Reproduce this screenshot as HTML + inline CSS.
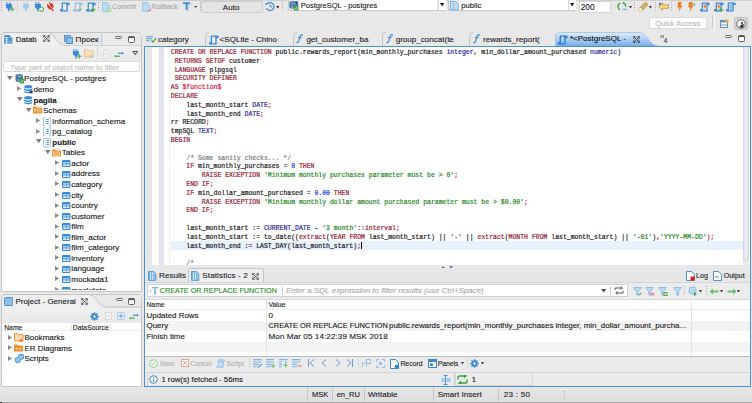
<!DOCTYPE html><html><head><meta charset="utf-8"><style>html,body{margin:0;padding:0;}body{width:752px;height:403px;overflow:hidden;position:relative;background:#e8e8e8;font-family:"Liberation Sans",sans-serif;}</style></head><body>
<svg style="position:absolute;left:1px;top:2px" width="1" height="10" viewBox="0 0 1 10"><rect x="0" y="0.0" width="1" height="1" fill="#a8a8a8"/><rect x="0" y="2.5" width="1" height="1" fill="#a8a8a8"/><rect x="0" y="5.0" width="1" height="1" fill="#a8a8a8"/><rect x="0" y="7.5" width="1" height="1" fill="#a8a8a8"/></svg>
<div style="position:absolute;left:0px;top:0px;width:752px;height:0.8px;background:#cfcfcf"></div>
<svg style="position:absolute;left:5px;top:1.8px" width="10" height="10" viewBox="0 0 10 10"><rect x="1.5" y="0" width="1" height="2.4" fill="#3a8ad6"/><rect x="4.3" y="0" width="1" height="2.4" fill="#3a8ad6"/><path d="M0.9 2.1 H6.9 V4.4 Q6.9 6.6 4.6 7.1 V9.6 H3.2 V7.1 Q0.9 6.6 0.9 4.4 Z" fill="#3a8ad6"/><path d="M7.2 5 V9.6 M4.9 7.3 H9.5" stroke="#4aa84a" stroke-width="1.05"/></svg>
<div style="position:absolute;left:17.3px;top:0px;width:1px;height:12.5px;background:#d6d6d6"></div>
<svg style="position:absolute;left:22.4px;top:1.8px" width="10" height="10" viewBox="0 0 10 10"><rect x="1.5" y="0" width="1" height="2.4" fill="#9ccbee"/><rect x="4.3" y="0" width="1" height="2.4" fill="#9ccbee"/><path d="M0.9 2.1 H6.9 V4.4 Q6.9 6.6 4.6 7.1 V9.6 H3.2 V7.1 Q0.9 6.6 0.9 4.4 Z" fill="#9ccbee"/></svg>
<svg style="position:absolute;left:34.4px;top:1.8px" width="10" height="10" viewBox="0 0 10 10"><rect x="1.5" y="0" width="1" height="2.4" fill="#3a8ad6"/><rect x="4.3" y="0" width="1" height="2.4" fill="#3a8ad6"/><path d="M0.9 2.1 H6.9 V4.4 Q6.9 6.6 4.6 7.1 V9.6 H3.2 V7.1 Q0.9 6.6 0.9 4.4 Z" fill="#3a8ad6"/><path d="M5.6 6.2 A2.1 2.1 0 1 1 6 8.6" stroke="#4aa84a" stroke-width="1.1" fill="#fff"/><path d="M5 8.8 L6.6 9.6 L6.4 7.8 Z" fill="#4aa84a"/></svg>
<svg style="position:absolute;left:47.2px;top:1.6px" width="10" height="10" viewBox="0 0 10 10"><g transform="rotate(-30 4 5)"><rect x="1.5" y="0" width="1" height="2.4" fill="#e0342a"/><rect x="4.3" y="0" width="1" height="2.4" fill="#e0342a"/><path d="M0.9 2.1 H6.9 V4.4 Q6.9 6.6 4.6 7.1 V9.6 H3.2 V7.1 Q0.9 6.6 0.9 4.4 Z" fill="#e0342a"/></g><path d="M0.8 1.8 L8 9" stroke="#ececec" stroke-width="0.8"/></svg>
<svg style="position:absolute;left:59.8px;top:1.8px" width="10" height="10" viewBox="0 0 10 10"><g opacity="1" fill="none" stroke="#3a8ad6" stroke-width="1.25" stroke-linecap="round"><path d="M2.3 8.6 V1.2 H8.2 Q9.2 1.2 9.2 2.1 Q9.2 2.7 8.4 2.7 H7"/><path d="M7 1.4 V8.6"/><path d="M7 8.9 H1.4 Q0.5 8.9 0.5 8.1 Q0.5 7.5 1.2 7.5 H2.3"/></g></svg>
<svg style="position:absolute;left:72.8px;top:1.8px" width="10" height="10" viewBox="0 0 10 10"><g opacity="0.45" fill="none" stroke="#3a8ad6" stroke-width="1.25" stroke-linecap="round"><path d="M2.3 8.6 V1.2 H8.2 Q9.2 1.2 9.2 2.1 Q9.2 2.7 8.4 2.7 H7"/><path d="M7 1.4 V8.6"/><path d="M7 8.9 H1.4 Q0.5 8.9 0.5 8.1 Q0.5 7.5 1.2 7.5 H2.3"/></g><path d="M4 7.6 H8 M6.6 6.2 L8.2 7.6 L6.6 9" stroke="#80c880" stroke-width="1.1" fill="none"/></svg>
<svg style="position:absolute;left:86.1px;top:1.8px" width="10" height="10" viewBox="0 0 10 10"><g opacity="1" fill="none" stroke="#3a8ad6" stroke-width="1.25" stroke-linecap="round"><path d="M2.3 8.6 V1.2 H8.2 Q9.2 1.2 9.2 2.1 Q9.2 2.7 8.4 2.7 H7"/><path d="M7 1.4 V8.6"/><path d="M7 8.9 H1.4 Q0.5 8.9 0.5 8.1 Q0.5 7.5 1.2 7.5 H2.3"/></g><path d="M7 5.2 V10 M4.6 7.6 H9.4" stroke="#4aa84a" stroke-width="1.2"/></svg>
<svg style="position:absolute;left:98px;top:2px" width="1" height="10" viewBox="0 0 1 10"><rect x="0" y="0.0" width="1" height="1" fill="#a8a8a8"/><rect x="0" y="2.5" width="1" height="1" fill="#a8a8a8"/><rect x="0" y="5.0" width="1" height="1" fill="#a8a8a8"/><rect x="0" y="7.5" width="1" height="1" fill="#a8a8a8"/></svg>
<svg style="position:absolute;left:101.5px;top:1.8px" width="10" height="10" viewBox="0 0 10 10"><path d="M0.5 0.5 H5.2 L7.8 3.1 V9.5 H0.5 Z" fill="#bcdcf2" stroke="#94c6ea" stroke-width="0.9"/><path d="M5.2 0.5 V3.1 H7.8" fill="#e4f1fa" stroke="#94c6ea" stroke-width="0.7"/><rect x="5" y="5.8" width="4.3" height="4" rx="1" fill="#a8dba2"/><path d="M6.2 7.9 l0.8 0.6 l1.2 -1.3" stroke="#fff" stroke-width="0.6" fill="none"/></svg>
<div style="position:absolute;left:112.3px;top:4.00px;font-family:'Liberation Sans', sans-serif;font-size:6.85px;line-height:6.85px;color:#a9a9a9;font-weight:400;white-space:pre;-webkit-text-stroke:0.12px #a9a9a9;">Commit</div>
<svg style="position:absolute;left:141.6px;top:1.8px" width="10" height="10" viewBox="0 0 10 10"><path d="M0.5 0.5 H5.2 L7.8 3.1 V9.5 H0.5 Z" fill="#bcdcf2" stroke="#94c6ea" stroke-width="0.9"/><path d="M5.2 0.5 V3.1 H7.8" fill="#e4f1fa" stroke="#94c6ea" stroke-width="0.7"/><path d="M5.6 8.4 h3 M8.6 8.4 v-1.6" stroke="#ef8a7a" stroke-width="1.1" fill="none"/></svg>
<div style="position:absolute;left:151.5px;top:4.00px;font-family:'Liberation Sans', sans-serif;font-size:6.85px;line-height:6.85px;color:#a9a9a9;font-weight:400;white-space:pre;-webkit-text-stroke:0.12px #a9a9a9;">Rollback</div>
<svg style="position:absolute;left:183px;top:1.8px" width="10" height="10" viewBox="0 0 10 10"><path d="M0 1.2 H7" stroke="#3a8ad6" stroke-width="1.7"/><path d="M3.6 0.4 V8" stroke="#3a8ad6" stroke-width="1.9"/><path d="M5 2 V9" stroke="#8cc0ea" stroke-width="1.1"/><path d="M7 2.6 H8.8" stroke="#8cc0ea" stroke-width="0.8"/></svg>
<svg style="position:absolute;left:193.8px;top:6.1px" width="3.2" height="2" viewBox="0 0 3.2 2"><path d="M0 0 L3.2 0 L1.6 2 Z" fill="#555"/></svg>
<svg style="position:absolute;left:199.5px;top:2px" width="1" height="10" viewBox="0 0 1 10"><rect x="0" y="0.0" width="1" height="1" fill="#a8a8a8"/><rect x="0" y="2.5" width="1" height="1" fill="#a8a8a8"/><rect x="0" y="5.0" width="1" height="1" fill="#a8a8a8"/><rect x="0" y="7.5" width="1" height="1" fill="#a8a8a8"/></svg>
<div style="position:absolute;left:201px;top:0.5px;width:61.5px;height:12.5px;background:#e4e4e4;border:1px solid #cdcdcd;box-sizing:border-box;border-radius:2px"></div>
<div style="position:absolute;left:222.8px;top:4.00px;font-family:'Liberation Sans', sans-serif;font-size:8.05px;line-height:8.05px;color:#222;font-weight:400;white-space:pre;-webkit-text-stroke:0.12px #222;">Auto</div>
<svg style="position:absolute;left:264.6px;top:2.2px" width="10" height="9" viewBox="0 0 10 9"><path d="M1.3 6.2 A4 4 0 1 0 1.4 2.6" stroke="#3a8ad6" stroke-width="1.15" fill="none"/><path d="M0 1.2 L2.6 1.6 L1 3.6 Z" fill="#3a8ad6"/><path d="M5.2 2.2 V4.8 H7" stroke="#3a8ad6" stroke-width="1" fill="none"/></svg>
<svg style="position:absolute;left:275.5px;top:6px" width="3.5" height="2.5" viewBox="0 0 3.5 2.5"><path d="M0 0 L3.5 0 L1.75 2.5 Z" fill="#333"/></svg>
<svg style="position:absolute;left:281.5px;top:2px" width="1" height="10" viewBox="0 0 1 10"><rect x="0" y="0.0" width="1" height="1" fill="#a8a8a8"/><rect x="0" y="2.5" width="1" height="1" fill="#a8a8a8"/><rect x="0" y="5.0" width="1" height="1" fill="#a8a8a8"/><rect x="0" y="7.5" width="1" height="1" fill="#a8a8a8"/></svg>
<div style="position:absolute;left:288px;top:-1px;width:158px;height:11.8px;background:#e6e6e6;border:1px solid #cacaca;box-sizing:border-box"></div>
<div style="position:absolute;left:299.2px;top:0px;width:138.3px;height:9.8px;background:#fff"></div>
<svg style="position:absolute;left:288.5px;top:0.6px" width="10" height="10" viewBox="0 0 10 10"><path d="M0.4 1.8 Q0.4 0.3 2 0.3 H7.6 Q9.2 0.3 9.2 1.8 V4.6 Q9.2 6.2 7.8 6.6 L7.2 7.6 H2.4 Q0.4 7.6 0.4 5.6 Z" fill="#4b77a6"/><path d="M2.2 2 Q4.2 3.6 7.2 2.2 M3 4.4 L3.4 7" stroke="#c8dcf0" stroke-width="0.7" fill="none"/><circle cx="7.4" cy="1.8" r="1.1" fill="#2a3f8a"/><rect x="4.8" y="4.6" width="4.6" height="4.8" rx="0.8" fill="#3da34a"/><path d="M5.9 7.1 l1 0.9 l1.4 -1.9" stroke="#fff" stroke-width="0.7" fill="none"/></svg>
<div style="position:absolute;left:300.7px;top:2.00px;font-family:'Liberation Sans', sans-serif;font-size:7.55px;line-height:7.55px;color:#1a1a1a;font-weight:400;white-space:pre;-webkit-text-stroke:0.12px #1a1a1a;">PostgreSQL - postgres</div>
<div style="position:absolute;left:437.6px;top:0px;width:8px;height:9.8px;background:#fff;border-left:1px solid #d8d8d8;box-sizing:border-box"></div>
<svg style="position:absolute;left:439.6px;top:3.4px" width="4.2" height="3.6" viewBox="0 0 4.2 3.6"><path d="M0 0 L4.2 0 L2.1 3.6 Z" fill="#1a1a1a"/></svg>
<div style="position:absolute;left:448px;top:-1px;width:127.8px;height:11.8px;background:#e6e6e6;border:1px solid #cacaca;box-sizing:border-box"></div>
<div style="position:absolute;left:459.4px;top:0px;width:109px;height:9.8px;background:#fff"></div>
<svg style="position:absolute;left:449.8px;top:0.8px" width="9" height="10" viewBox="0 0 9 10"><path d="M0.5 0.5 H5.6 L8.2 3.1 V9 H0.5 Z" fill="#cfe4f6" stroke="#6aaae6" stroke-width="0.9"/><path d="M3.2 2.6 H4.6 M3.2 4.4 H4.6 M3.2 6.2 H4.6 M3.2 7.8 H4.6" stroke="#5a9ad8" stroke-width="0.8"/><path d="M2.6 1.8 V8.4 M5.2 2 V8.4" stroke="#a8cff0" stroke-width="0.5"/></svg>
<div style="position:absolute;left:461.2px;top:2.00px;font-family:'Liberation Sans', sans-serif;font-size:7.7px;line-height:7.7px;color:#1a1a1a;font-weight:400;white-space:pre;-webkit-text-stroke:0.12px #1a1a1a;">public</div>
<div style="position:absolute;left:568.4px;top:0px;width:7.4px;height:9.8px;background:#fff;border-left:1px solid #d8d8d8;box-sizing:border-box"></div>
<svg style="position:absolute;left:570.2px;top:3.4px" width="4.2" height="3.6" viewBox="0 0 4.2 3.6"><path d="M0 0 L4.2 0 L2.1 3.6 Z" fill="#1a1a1a"/></svg>
<div style="position:absolute;left:578.5px;top:0.5px;width:32px;height:12px;background:#fff;border:1px solid #d6d6d6;box-sizing:border-box"></div>
<div style="position:absolute;left:580.7px;top:3.00px;font-family:'Liberation Sans', sans-serif;font-size:8.4px;line-height:8.4px;color:#1a1a1a;font-weight:400;white-space:pre;-webkit-text-stroke:0.12px #1a1a1a;">200</div>
<svg style="position:absolute;left:616.5px;top:2px" width="11" height="9" viewBox="0 0 11 9"><path d="M3.2 0.9 Q0.6 2.6 0.9 5 Q1.2 7 2.8 7.9" stroke="#45a845" stroke-width="1.5" fill="none"/><path d="M6.3 0.9 Q8.4 1.4 8.9 4.6" stroke="#45a845" stroke-width="1.4" fill="none"/><path d="M5.2 0 L7.4 0.2 L6.4 2.4 Z" fill="#45a845"/><path d="M5.2 5.8 L7.7 7.3 L5.2 8.9 Z M10.2 5.8 L7.7 7.3 L10.2 8.9 Z" fill="#9ccaee"/><circle cx="7.7" cy="7.4" r="0.6" fill="#3a8ad6"/></svg>
<svg style="position:absolute;left:629px;top:6px" width="3" height="2.5" viewBox="0 0 3 2.5"><path d="M0 0 L3 0 L1.5 2.5 Z" fill="#333"/></svg>
<svg style="position:absolute;left:634px;top:2px" width="1" height="10" viewBox="0 0 1 10"><rect x="0" y="0.0" width="1" height="1" fill="#a8a8a8"/><rect x="0" y="2.5" width="1" height="1" fill="#a8a8a8"/><rect x="0" y="5.0" width="1" height="1" fill="#a8a8a8"/><rect x="0" y="7.5" width="1" height="1" fill="#a8a8a8"/></svg>
<svg style="position:absolute;left:637.8px;top:2px" width="10" height="10" viewBox="0 0 10 10"><g transform="rotate(45 5 5)"><rect x="3" y="-0.6" width="4" height="11.2" rx="1.6" fill="#e6b24a" stroke="#c89236" stroke-width="0.5"/><rect x="3" y="5.2" width="4" height="2.2" fill="#a9a9b4"/><rect x="3.2" y="7.4" width="3.6" height="3" rx="1.2" fill="#fbf0c0"/><circle cx="5" cy="1.6" r="0.9" fill="#5a9ad8"/></g></svg>
<svg style="position:absolute;left:649px;top:6px" width="3" height="2.5" viewBox="0 0 3 2.5"><path d="M0 0 L3 0 L1.5 2.5 Z" fill="#333"/></svg>
<svg style="position:absolute;left:655px;top:2px" width="1" height="10" viewBox="0 0 1 10"><rect x="0" y="0.0" width="1" height="1" fill="#a8a8a8"/><rect x="0" y="2.5" width="1" height="1" fill="#a8a8a8"/><rect x="0" y="5.0" width="1" height="1" fill="#a8a8a8"/><rect x="0" y="7.5" width="1" height="1" fill="#a8a8a8"/></svg>
<svg style="position:absolute;left:658px;top:2px" width="11" height="9" viewBox="0 0 11 9"><path d="M0.5 4.5 L4.5 0.8 v2 h6 v3.5 h-6 v2 z" fill="#f7d68a" stroke="#c89a3a" stroke-width="0.9"/><circle cx="2" cy="2" r="1.3" fill="#3d86d0"/></svg>
<svg style="position:absolute;left:671px;top:2px" width="1" height="10" viewBox="0 0 1 10"><rect x="0" y="0.0" width="1" height="1" fill="#a8a8a8"/><rect x="0" y="2.5" width="1" height="1" fill="#a8a8a8"/><rect x="0" y="5.0" width="1" height="1" fill="#a8a8a8"/><rect x="0" y="7.5" width="1" height="1" fill="#a8a8a8"/></svg>
<svg style="position:absolute;left:677px;top:1.5px" width="6" height="10" viewBox="0 0 6 10"><path d="M1 0 h4 l-1.5 3.5 h2 l-4 6.5 l1 -4.5 h-2 z" fill="#f07c1e"/></svg>
<svg style="position:absolute;left:688px;top:1.5px" width="8" height="10" viewBox="0 0 8 10"><path d="M1 0 h4 l-1.5 3.5 h2 l-4 6.5 l1 -4.5 h-2 z" fill="#f07c1e"/><path d="M6 1 v3 M4.5 2.5 h3" stroke="#6cc06c" stroke-width="0.9"/></svg>
<svg style="position:absolute;left:700px;top:1.8px" width="10" height="10" viewBox="0 0 10 10"><g opacity="1" fill="none" stroke="#3a8ad6" stroke-width="1.25" stroke-linecap="round"><path d="M2.3 8.6 V1.2 H8.2 Q9.2 1.2 9.2 2.1 Q9.2 2.7 8.4 2.7 H7"/><path d="M7 1.4 V8.6"/><path d="M7 8.9 H1.4 Q0.5 8.9 0.5 8.1 Q0.5 7.5 1.2 7.5 H2.3"/></g><path d="M3.6 2.8 h2.4 l-0.6 1.6 h0.9 l-2 3 l0.4 -2 h-0.9 z" fill="#f07c1e"/></svg>
<svg style="position:absolute;left:713.5px;top:1.8px" width="10" height="10" viewBox="0 0 10 10"><g opacity="1" fill="none" stroke="#3a8ad6" stroke-width="1.25" stroke-linecap="round"><path d="M2.3 8.6 V1.2 H8.2 Q9.2 1.2 9.2 2.1 Q9.2 2.7 8.4 2.7 H7"/><path d="M7 1.4 V8.6"/><path d="M7 8.9 H1.4 Q0.5 8.9 0.5 8.1 Q0.5 7.5 1.2 7.5 H2.3"/></g><path d="M3.6 2.8 h2.4 l-0.6 1.6 h0.9 l-2 3 l0.4 -2 h-0.9 z" fill="#f07c1e"/><path d="M7.2 5.6 V10 M5 7.8 H9.4" stroke="#4aa84a" stroke-width="1.2"/></svg>
<svg style="position:absolute;left:726.2px;top:1.8px" width="10" height="10" viewBox="0 0 10 10"><g opacity="1" fill="none" stroke="#3a8ad6" stroke-width="1.25" stroke-linecap="round"><path d="M2.3 8.6 V1.2 H8.2 Q9.2 1.2 9.2 2.1 Q9.2 2.7 8.4 2.7 H7"/><path d="M7 1.4 V8.6"/><path d="M7 8.9 H1.4 Q0.5 8.9 0.5 8.1 Q0.5 7.5 1.2 7.5 H2.3"/></g><path d="M3.6 3.6 h2.2 M3.6 5.3 h2.2 M3.6 7 h2.2" stroke="#3a8ad6" stroke-width="0.9"/></svg>
<div style="position:absolute;left:648.5px;top:16.5px;width:58px;height:12px;background:#fff;border:1px solid #dadada;box-sizing:border-box"></div>
<div style="position:absolute;left:655.2px;top:20.00px;font-family:'Liberation Sans', sans-serif;font-size:7.5px;line-height:7.5px;color:#b9b9b9;font-weight:400;white-space:pre;-webkit-text-stroke:0.12px #b9b9b9;">Quick Access</div>
<svg style="position:absolute;left:711.5px;top:16px" width="1" height="13" viewBox="0 0 1 13"><rect x="0" y="0.0" width="1" height="1" fill="#a8a8a8"/><rect x="0" y="2.5" width="1" height="1" fill="#a8a8a8"/><rect x="0" y="5.0" width="1" height="1" fill="#a8a8a8"/><rect x="0" y="7.5" width="1" height="1" fill="#a8a8a8"/><rect x="0" y="10.0" width="1" height="1" fill="#a8a8a8"/></svg>
<div style="position:absolute;left:714px;top:14px;width:1px;height:18px;background:#f6f6f6"></div>
<svg style="position:absolute;left:720px;top:18.5px" width="9" height="9" viewBox="0 0 9 9"><rect x="0.5" y="1.5" width="7" height="7" fill="#fff" stroke="#6a8fb8" stroke-width="1"/><rect x="0.5" y="1.5" width="7" height="2" fill="#6a8fb8"/><path d="M0.5 6 h7" stroke="#6a8fb8" stroke-width="1"/><circle cx="7" cy="2" r="1.8" fill="#f3b13a"/></svg>
<div style="position:absolute;left:734px;top:17px;width:13.5px;height:12.5px;background:#d2d2d2;border:1px solid #c2c2c2;box-sizing:border-box;border-radius:2px"></div>
<svg style="position:absolute;left:736px;top:18.5px" width="10" height="10" viewBox="0 0 10 10"><circle cx="5" cy="5" r="4.3" fill="#f4f4f4" stroke="#555" stroke-width="0.8"/><path d="M3 8 q2 -3 5 -3 l-1 4 z" fill="#333"/><circle cx="6" cy="4" r="1" fill="#333"/></svg>
<div style="position:absolute;left:1px;top:32px;width:141px;height:259.5px;box-sizing:border-box;border:1px solid #c6c6c6;border-radius:5px 5px 0 0;background:#fff;overflow:hidden">
<div style="position:absolute;left:0;top:0;width:141px;height:13px;background:#e9e9e9"></div>
</div>
<div style="position:absolute;left:2px;top:45px;width:139px;height:16.5px;background:linear-gradient(#efefef,#e9e9e9)"></div>
<svg style="position:absolute;left:1px;top:32px" width="142" height="14" viewBox="0 0 142 14"><path d="M0.5 14 V5 Q0.5 0.5 5 0.5 H46.5 C53 0.5 56 13 64 13.5 H140.5" fill="#efefef" stroke="#c2c2c2" stroke-width="1"/><path d="M64 13.5 H140.5" stroke="#d0d0d0" stroke-width="1"/><path d="M100.5 0.5 V13.5" stroke="#c8c8c8" stroke-width="1"/></svg>
<svg style="position:absolute;left:3.8px;top:34.8px" width="9" height="9" viewBox="0 0 9 9"><rect x="0" y="0.3" width="6.5" height="1.8" rx="0.9" fill="#2f80d0"/><rect x="0" y="3" width="2.2" height="1.5" fill="#2f80d0"/><rect x="3.2" y="2.5" width="5.3" height="2.2" rx="1" fill="#2f80d0"/><rect x="0" y="5.2" width="2.2" height="1.3" fill="#2f80d0"/><rect x="3.2" y="5.2" width="5.3" height="1.3" fill="#2f80d0"/><rect x="0" y="7.2" width="2.2" height="1.3" fill="#2f80d0"/><rect x="3.2" y="7.2" width="5.3" height="1.3" rx="0.6" fill="#2f80d0"/></svg>
<div style="position:absolute;left:15.85px;top:36.00px;font-family:'Liberation Sans', sans-serif;font-size:7.8px;line-height:7.8px;color:#151515;font-weight:400;white-space:pre;-webkit-text-stroke:0.12px #151515;">Datab</div>
<svg style="position:absolute;left:43px;top:35.4px" width="7" height="7" viewBox="0 0 7 7"><path d="M1.6 1.6 L5.4 5.4 M5.4 1.6 L1.6 5.4" stroke="#3c3c3c" stroke-width="0.75"/><path d="M0.8 2.2 V0.8 H2.2 M4.8 0.8 H6.2 V2.2 M6.2 4.8 V6.2 H4.8 M2.2 6.2 H0.8 V4.8" stroke="#3c3c3c" stroke-width="1.05" fill="none"/><path d="M2.1 0.9 Q3.5 1.6 4.9 0.9 M2.1 6.1 Q3.5 5.4 4.9 6.1 M0.9 2.1 Q1.6 3.5 0.9 4.9 M6.1 2.1 Q5.4 3.5 6.1 4.9" stroke="#3c3c3c" stroke-width="0.5" fill="none" opacity="0.75"/></svg>
<svg style="position:absolute;left:64px;top:35px" width="9" height="9" viewBox="0 0 9 9"><rect x="0.5" y="0.5" width="6" height="6" fill="#8cc0ea" stroke="#3d86d0" stroke-width="0.8"/><rect x="2.5" y="2.5" width="6" height="6" fill="#8cc0ea" stroke="#3d86d0" stroke-width="0.8"/></svg>
<div style="position:absolute;left:75.6px;top:36.00px;font-family:'Liberation Sans', sans-serif;font-size:8.1px;line-height:8.1px;color:#151515;font-weight:400;white-space:pre;-webkit-text-stroke:0.12px #151515;letter-spacing:0.05px">Проек</div>
<svg style="position:absolute;left:115px;top:35.5px" width="7" height="3" viewBox="0 0 7 3"><rect x="0.5" y="0.5" width="6" height="2" rx="1" fill="#fff" stroke="#555" stroke-width="0.9"/></svg>
<svg style="position:absolute;left:128.3px;top:35.5px" width="7" height="7" viewBox="0 0 7 7"><rect x="0.5" y="0.5" width="6" height="6" rx="1.2" fill="#fff" stroke="#555" stroke-width="0.9"/><rect x="0.5" y="0.5" width="6" height="1.6" fill="#555"/></svg>
<svg style="position:absolute;left:72.4px;top:49.2px" width="10" height="10" viewBox="0 0 10 10"><rect x="1.5" y="0" width="1" height="2.4" fill="#3a8ad6"/><rect x="4.3" y="0" width="1" height="2.4" fill="#3a8ad6"/><path d="M0.9 2.1 H6.9 V4.4 Q6.9 6.6 4.6 7.1 V9.6 H3.2 V7.1 Q0.9 6.6 0.9 4.4 Z" fill="#3a8ad6"/><path d="M7.2 5 V9.6 M4.9 7.3 H9.5" stroke="#4aa84a" stroke-width="1.05"/></svg>
<svg style="position:absolute;left:84.2px;top:49.2px" width="10" height="10" viewBox="0 0 10 10"><path d="M0.5 1 H3.4 L4.3 2 H9 V8 H0.5 Z" fill="#fbe0c4" stroke="#f5b77a" stroke-width="0.9"/><path d="M6.8 5.4 V9.4 M4.8 7.4 H8.8" stroke="#a8d8a0" stroke-width="1.1"/></svg>
<div style="position:absolute;left:97.3px;top:47px;width:1px;height:13px;background:#dadada"></div>
<svg style="position:absolute;left:102.8px;top:49.8px" width="8" height="9" viewBox="0 0 8 9"><rect x="0.5" y="0.5" width="6.5" height="7.5" rx="0.8" fill="#f2f2f2" stroke="#dcdcdc" stroke-width="0.9"/><path d="M2 4.25 h3.5" stroke="#d4d4d4" stroke-width="1"/></svg>
<svg style="position:absolute;left:114px;top:50.5px" width="10" height="7" viewBox="0 0 10 7"><path d="M1.5 5.2 H6" stroke="#45a845" stroke-width="1.1"/><path d="M0 5.2 L2.2 3.8 V6.6 Z" fill="#45a845"/><path d="M4 2.2 H8.5" stroke="#3a8ad6" stroke-width="1.1"/><path d="M10 2.2 L7.8 0.8 V3.6 Z" fill="#3a8ad6"/></svg>
<svg style="position:absolute;left:131.8px;top:51.4px" width="6.5" height="4.5" viewBox="0 0 6.5 4.5"><path d="M0 0 H6.5 L3.25 4.2 Z" fill="#4a4a4a"/><path d="M1.4 0.9 H5.1 L3.25 2.4 Z" fill="#f4f4f4"/></svg>
<div style="position:absolute;left:3px;top:61.2px;width:136.5px;height:11.2px;background:#fff;border:1px solid #dcdcdc;box-sizing:border-box;border-radius:2px"></div>
<div style="position:absolute;left:10.0px;top:64.00px;font-family:'Liberation Sans', sans-serif;font-size:7.65px;line-height:7.65px;color:#bdbdbd;font-weight:400;white-space:pre;-webkit-text-stroke:0.12px #bdbdbd;">Type part of object name to filter</div>
<svg style="position:absolute;left:7.3px;top:75.9px" width="6" height="4.5" viewBox="0 0 6 4.5"><path d="M0 0 H5.5 L2.75 4.2 Z" fill="#7c7c7c"/></svg>
<svg style="position:absolute;left:14.7px;top:73.9px" width="10" height="10" viewBox="0 0 10 10"><path d="M0.5 1.5 Q0.5 0.3 2 0.3 H6.5 Q8 0.3 8 1.8 V6 Q8 8 6 8 H2.5 Q0.5 8 0.5 6 Z" fill="#4b77a6"/><path d="M2.5 2 Q4 3.5 6.5 2.2 M3 5 L3.4 7.5" stroke="#c8dcf0" stroke-width="0.7" fill="none"/><rect x="4.6" y="4.8" width="4.6" height="4.6" rx="0.6" fill="#3da34a"/><path d="M5.7 7.2 l1 0.9 l1.4 -1.8" stroke="#fff" stroke-width="0.7" fill="none"/></svg>
<div style="position:absolute;left:24.1px;top:75.00px;font-family:'Liberation Sans', sans-serif;font-size:8.1px;line-height:8.1px;color:#151515;font-weight:400;white-space:pre;-webkit-text-stroke:0.12px #151515;">PostgreSQL - postgres</div>
<svg style="position:absolute;left:17.4px;top:86.36000000000001px" width="4.5" height="5.5" viewBox="0 0 4.5 5.5"><path d="M0 0 L4.2 2.5 L0 5 Z" fill="#8c8c8c"/></svg>
<svg style="position:absolute;left:23.8px;top:85.16000000000001px" width="9" height="9" viewBox="0 0 9 9"><ellipse cx="4.2" cy="1.8" rx="4" ry="1.7" fill="#3a8ad6"/><path d="M0.2 2.6 Q0.2 4.4 4.2 4.4 Q8.2 4.4 8.2 2.6 V4.2 Q8.2 5.9 4.2 5.9 Q0.2 5.9 0.2 4.2 Z" fill="#3a8ad6"/><path d="M0.2 5 Q0.2 6.8 4.2 6.8 Q8.2 6.8 8.2 5 V6.6 Q8.2 8.3 4.2 8.3 Q0.2 8.3 0.2 6.6 Z" fill="#3a8ad6"/><rect x="5.6" y="5.6" width="3" height="2.8" fill="#2a3f8a"/></svg>
<div style="position:absolute;left:33.52px;top:86.00px;font-family:'Liberation Sans', sans-serif;font-size:8.1px;line-height:8.1px;color:#151515;font-weight:400;white-space:pre;-webkit-text-stroke:0.12px #151515;">demo</div>
<svg style="position:absolute;left:16.7px;top:97.02000000000001px" width="6" height="4.5" viewBox="0 0 6 4.5"><path d="M0 0 H5.5 L2.75 4.2 Z" fill="#7c7c7c"/></svg>
<svg style="position:absolute;left:23.8px;top:95.72000000000001px" width="9" height="9" viewBox="0 0 9 9"><ellipse cx="4.2" cy="1.8" rx="4" ry="1.7" fill="#3a8ad6"/><path d="M0.2 2.6 Q0.2 4.4 4.2 4.4 Q8.2 4.4 8.2 2.6 V4.2 Q8.2 5.9 4.2 5.9 Q0.2 5.9 0.2 4.2 Z" fill="#3a8ad6"/><path d="M0.2 5 Q0.2 6.8 4.2 6.8 Q8.2 6.8 8.2 5 V6.6 Q8.2 8.3 4.2 8.3 Q0.2 8.3 0.2 6.6 Z" fill="#3a8ad6"/></svg>
<div style="position:absolute;left:33.52px;top:97.00px;font-family:'Liberation Sans', sans-serif;font-size:8.0px;line-height:8.0px;color:#151515;font-weight:700;white-space:pre;-webkit-text-stroke:0.1px #151515">pagila</div>
<svg style="position:absolute;left:26.1px;top:107.58000000000001px" width="6" height="4.5" viewBox="0 0 6 4.5"><path d="M0 0 H5.5 L2.75 4.2 Z" fill="#7c7c7c"/></svg>
<svg style="position:absolute;left:33.2px;top:106.38000000000001px" width="9" height="8" viewBox="0 0 9 8"><path d="M0 0.6 H3.2 L4 1.4 H9 V7.5 H0 Z" fill="#f0902a"/><path d="M2 3.4 V6.2 M4.5 3.4 V6.2 M7 3.4 V6.2" stroke="#fde3c6" stroke-width="0.9"/><path d="M1.4 3.2 H7.6" stroke="#fde3c6" stroke-width="0.6"/></svg>
<div style="position:absolute;left:42.94px;top:107.00px;font-family:'Liberation Sans', sans-serif;font-size:8.1px;line-height:8.1px;color:#151515;font-weight:400;white-space:pre;-webkit-text-stroke:0.12px #151515;">Schemas</div>
<svg style="position:absolute;left:36.2px;top:118.04000000000002px" width="4.5" height="5.5" viewBox="0 0 4.5 5.5"><path d="M0 0 L4.2 2.5 L0 5 Z" fill="#8c8c8c"/></svg>
<svg style="position:absolute;left:42.7px;top:116.74000000000001px" width="8.5" height="9.5" viewBox="0 0 8.5 9.5"><path d="M2 0.5 H0.5 V8.5 H2 M6.2 0.5 H7.7 V8.5 H6.2" stroke="#8ec2ec" stroke-width="0.9" fill="none"/><path d="M2.2 2.5 h0.8 M2.2 4.5 h0.8 M2.2 6.5 h0.8" stroke="#8cc4ee" stroke-width="0.8"/><path d="M3.6 2.5 h2 M3.6 4.5 h2 M3.6 6.5 h2" stroke="#2f7fd0" stroke-width="1"/></svg>
<div style="position:absolute;left:52.36px;top:118.00px;font-family:'Liberation Sans', sans-serif;font-size:8.1px;line-height:8.1px;color:#151515;font-weight:400;white-space:pre;-webkit-text-stroke:0.12px #151515;">information_schema</div>
<svg style="position:absolute;left:36.2px;top:128.60000000000002px" width="4.5" height="5.5" viewBox="0 0 4.5 5.5"><path d="M0 0 L4.2 2.5 L0 5 Z" fill="#8c8c8c"/></svg>
<svg style="position:absolute;left:42.7px;top:127.30000000000001px" width="8.5" height="9.5" viewBox="0 0 8.5 9.5"><path d="M2 0.5 H0.5 V8.5 H2 M6.2 0.5 H7.7 V8.5 H6.2" stroke="#8ec2ec" stroke-width="0.9" fill="none"/><path d="M2.2 2.5 h0.8 M2.2 4.5 h0.8 M2.2 6.5 h0.8" stroke="#8cc4ee" stroke-width="0.8"/><path d="M3.6 2.5 h2 M3.6 4.5 h2 M3.6 6.5 h2" stroke="#2f7fd0" stroke-width="1"/></svg>
<div style="position:absolute;left:52.36px;top:128.00px;font-family:'Liberation Sans', sans-serif;font-size:8.1px;line-height:8.1px;color:#151515;font-weight:400;white-space:pre;-webkit-text-stroke:0.12px #151515;">pg_catalog</div>
<svg style="position:absolute;left:35.5px;top:139.26px" width="6" height="4.5" viewBox="0 0 6 4.5"><path d="M0 0 H5.5 L2.75 4.2 Z" fill="#7c7c7c"/></svg>
<svg style="position:absolute;left:43.10000000000001px;top:137.56px" width="8" height="10" viewBox="0 0 8 10"><rect x="0.5" y="0.5" width="7" height="8.6" rx="1.6" fill="#fafcff" stroke="#8ec2ec" stroke-width="0.9"/><path d="M2 2.6 h0.9 M2 4.6 h0.9 M2 6.6 h0.9" stroke="#9cc8ee" stroke-width="0.8"/><path d="M3.8 2.6 h2 M3.8 4.6 h2 M3.8 6.6 h2" stroke="#2f7fd0" stroke-width="1"/></svg>
<div style="position:absolute;left:52.36px;top:139.00px;font-family:'Liberation Sans', sans-serif;font-size:8.0px;line-height:8.0px;color:#151515;font-weight:700;white-space:pre;-webkit-text-stroke:0.1px #151515">public</div>
<svg style="position:absolute;left:44.9px;top:149.82px" width="6" height="4.5" viewBox="0 0 6 4.5"><path d="M0 0 H5.5 L2.75 4.2 Z" fill="#7c7c7c"/></svg>
<svg style="position:absolute;left:52.0px;top:148.62px" width="9" height="8" viewBox="0 0 9 8"><path d="M0 0.6 H3.2 L4 1.4 H9 V7.5 H0 Z" fill="#f0902a"/><rect x="1.4" y="3" width="6.2" height="3.6" fill="none" stroke="#fde3c6" stroke-width="0.7"/><path d="M1.4 4.8 H7.6" stroke="#fde3c6" stroke-width="0.6"/></svg>
<div style="position:absolute;left:61.78px;top:149.00px;font-family:'Liberation Sans', sans-serif;font-size:8.1px;line-height:8.1px;color:#151515;font-weight:400;white-space:pre;-webkit-text-stroke:0.12px #151515;">Tables</div>
<svg style="position:absolute;left:55.0px;top:160.28px" width="4.5" height="5.5" viewBox="0 0 4.5 5.5"><path d="M0 0 L4.2 2.5 L0 5 Z" fill="#8c8c8c"/></svg>
<svg style="position:absolute;left:61.6px;top:159.98px" width="9" height="7" viewBox="0 0 9 7"><rect x="0" y="0" width="8.4" height="7" rx="1" fill="#3a8ad6"/><rect x="1.1" y="2" width="2.8" height="1.7" fill="#a6d0f2"/><rect x="4.5" y="2" width="2.8" height="1.7" fill="#a6d0f2"/><rect x="1.1" y="4.4" width="2.8" height="1.6" fill="#e8f3fc"/><rect x="4.5" y="4.4" width="2.8" height="1.6" fill="#e8f3fc"/></svg>
<div style="position:absolute;left:71.2px;top:160.00px;font-family:'Liberation Sans', sans-serif;font-size:8.1px;line-height:8.1px;color:#151515;font-weight:400;white-space:pre;-webkit-text-stroke:0.12px #151515;">actor</div>
<svg style="position:absolute;left:55.0px;top:170.84px" width="4.5" height="5.5" viewBox="0 0 4.5 5.5"><path d="M0 0 L4.2 2.5 L0 5 Z" fill="#8c8c8c"/></svg>
<svg style="position:absolute;left:61.6px;top:170.54px" width="9" height="7" viewBox="0 0 9 7"><rect x="0" y="0" width="8.4" height="7" rx="1" fill="#3a8ad6"/><rect x="1.1" y="2" width="2.8" height="1.7" fill="#a6d0f2"/><rect x="4.5" y="2" width="2.8" height="1.7" fill="#a6d0f2"/><rect x="1.1" y="4.4" width="2.8" height="1.6" fill="#e8f3fc"/><rect x="4.5" y="4.4" width="2.8" height="1.6" fill="#e8f3fc"/></svg>
<div style="position:absolute;left:71.2px;top:170.00px;font-family:'Liberation Sans', sans-serif;font-size:8.1px;line-height:8.1px;color:#151515;font-weight:400;white-space:pre;-webkit-text-stroke:0.12px #151515;">address</div>
<svg style="position:absolute;left:55.0px;top:181.4px" width="4.5" height="5.5" viewBox="0 0 4.5 5.5"><path d="M0 0 L4.2 2.5 L0 5 Z" fill="#8c8c8c"/></svg>
<svg style="position:absolute;left:61.6px;top:181.1px" width="9" height="7" viewBox="0 0 9 7"><rect x="0" y="0" width="8.4" height="7" rx="1" fill="#3a8ad6"/><rect x="1.1" y="2" width="2.8" height="1.7" fill="#a6d0f2"/><rect x="4.5" y="2" width="2.8" height="1.7" fill="#a6d0f2"/><rect x="1.1" y="4.4" width="2.8" height="1.6" fill="#e8f3fc"/><rect x="4.5" y="4.4" width="2.8" height="1.6" fill="#e8f3fc"/></svg>
<div style="position:absolute;left:71.2px;top:181.00px;font-family:'Liberation Sans', sans-serif;font-size:8.1px;line-height:8.1px;color:#151515;font-weight:400;white-space:pre;-webkit-text-stroke:0.12px #151515;">category</div>
<svg style="position:absolute;left:55.0px;top:191.96px" width="4.5" height="5.5" viewBox="0 0 4.5 5.5"><path d="M0 0 L4.2 2.5 L0 5 Z" fill="#8c8c8c"/></svg>
<svg style="position:absolute;left:61.6px;top:191.66px" width="9" height="7" viewBox="0 0 9 7"><rect x="0" y="0" width="8.4" height="7" rx="1" fill="#3a8ad6"/><rect x="1.1" y="2" width="2.8" height="1.7" fill="#a6d0f2"/><rect x="4.5" y="2" width="2.8" height="1.7" fill="#a6d0f2"/><rect x="1.1" y="4.4" width="2.8" height="1.6" fill="#e8f3fc"/><rect x="4.5" y="4.4" width="2.8" height="1.6" fill="#e8f3fc"/></svg>
<div style="position:absolute;left:71.2px;top:192.00px;font-family:'Liberation Sans', sans-serif;font-size:8.1px;line-height:8.1px;color:#151515;font-weight:400;white-space:pre;-webkit-text-stroke:0.12px #151515;">city</div>
<svg style="position:absolute;left:55.0px;top:202.52px" width="4.5" height="5.5" viewBox="0 0 4.5 5.5"><path d="M0 0 L4.2 2.5 L0 5 Z" fill="#8c8c8c"/></svg>
<svg style="position:absolute;left:61.6px;top:202.22px" width="9" height="7" viewBox="0 0 9 7"><rect x="0" y="0" width="8.4" height="7" rx="1" fill="#3a8ad6"/><rect x="1.1" y="2" width="2.8" height="1.7" fill="#a6d0f2"/><rect x="4.5" y="2" width="2.8" height="1.7" fill="#a6d0f2"/><rect x="1.1" y="4.4" width="2.8" height="1.6" fill="#e8f3fc"/><rect x="4.5" y="4.4" width="2.8" height="1.6" fill="#e8f3fc"/></svg>
<div style="position:absolute;left:71.2px;top:202.00px;font-family:'Liberation Sans', sans-serif;font-size:8.1px;line-height:8.1px;color:#151515;font-weight:400;white-space:pre;-webkit-text-stroke:0.12px #151515;">country</div>
<svg style="position:absolute;left:55.0px;top:213.08px" width="4.5" height="5.5" viewBox="0 0 4.5 5.5"><path d="M0 0 L4.2 2.5 L0 5 Z" fill="#8c8c8c"/></svg>
<svg style="position:absolute;left:61.6px;top:212.78px" width="9" height="7" viewBox="0 0 9 7"><rect x="0" y="0" width="8.4" height="7" rx="1" fill="#3a8ad6"/><rect x="1.1" y="2" width="2.8" height="1.7" fill="#a6d0f2"/><rect x="4.5" y="2" width="2.8" height="1.7" fill="#a6d0f2"/><rect x="1.1" y="4.4" width="2.8" height="1.6" fill="#e8f3fc"/><rect x="4.5" y="4.4" width="2.8" height="1.6" fill="#e8f3fc"/></svg>
<div style="position:absolute;left:71.2px;top:213.00px;font-family:'Liberation Sans', sans-serif;font-size:8.1px;line-height:8.1px;color:#151515;font-weight:400;white-space:pre;-webkit-text-stroke:0.12px #151515;">customer</div>
<svg style="position:absolute;left:55.0px;top:223.64000000000001px" width="4.5" height="5.5" viewBox="0 0 4.5 5.5"><path d="M0 0 L4.2 2.5 L0 5 Z" fill="#8c8c8c"/></svg>
<svg style="position:absolute;left:61.6px;top:223.34px" width="9" height="7" viewBox="0 0 9 7"><rect x="0" y="0" width="8.4" height="7" rx="1" fill="#3a8ad6"/><rect x="1.1" y="2" width="2.8" height="1.7" fill="#a6d0f2"/><rect x="4.5" y="2" width="2.8" height="1.7" fill="#a6d0f2"/><rect x="1.1" y="4.4" width="2.8" height="1.6" fill="#e8f3fc"/><rect x="4.5" y="4.4" width="2.8" height="1.6" fill="#e8f3fc"/></svg>
<div style="position:absolute;left:71.2px;top:223.00px;font-family:'Liberation Sans', sans-serif;font-size:8.1px;line-height:8.1px;color:#151515;font-weight:400;white-space:pre;-webkit-text-stroke:0.12px #151515;">film</div>
<svg style="position:absolute;left:55.0px;top:234.20000000000002px" width="4.5" height="5.5" viewBox="0 0 4.5 5.5"><path d="M0 0 L4.2 2.5 L0 5 Z" fill="#8c8c8c"/></svg>
<svg style="position:absolute;left:61.6px;top:233.9px" width="9" height="7" viewBox="0 0 9 7"><rect x="0" y="0" width="8.4" height="7" rx="1" fill="#3a8ad6"/><rect x="1.1" y="2" width="2.8" height="1.7" fill="#a6d0f2"/><rect x="4.5" y="2" width="2.8" height="1.7" fill="#a6d0f2"/><rect x="1.1" y="4.4" width="2.8" height="1.6" fill="#e8f3fc"/><rect x="4.5" y="4.4" width="2.8" height="1.6" fill="#e8f3fc"/></svg>
<div style="position:absolute;left:71.2px;top:234.00px;font-family:'Liberation Sans', sans-serif;font-size:8.1px;line-height:8.1px;color:#151515;font-weight:400;white-space:pre;-webkit-text-stroke:0.12px #151515;">film_actor</div>
<svg style="position:absolute;left:55.0px;top:244.76000000000002px" width="4.5" height="5.5" viewBox="0 0 4.5 5.5"><path d="M0 0 L4.2 2.5 L0 5 Z" fill="#8c8c8c"/></svg>
<svg style="position:absolute;left:61.6px;top:244.46px" width="9" height="7" viewBox="0 0 9 7"><rect x="0" y="0" width="8.4" height="7" rx="1" fill="#3a8ad6"/><rect x="1.1" y="2" width="2.8" height="1.7" fill="#a6d0f2"/><rect x="4.5" y="2" width="2.8" height="1.7" fill="#a6d0f2"/><rect x="1.1" y="4.4" width="2.8" height="1.6" fill="#e8f3fc"/><rect x="4.5" y="4.4" width="2.8" height="1.6" fill="#e8f3fc"/></svg>
<div style="position:absolute;left:71.2px;top:244.00px;font-family:'Liberation Sans', sans-serif;font-size:8.1px;line-height:8.1px;color:#151515;font-weight:400;white-space:pre;-webkit-text-stroke:0.12px #151515;">film_category</div>
<svg style="position:absolute;left:55.0px;top:255.32000000000002px" width="4.5" height="5.5" viewBox="0 0 4.5 5.5"><path d="M0 0 L4.2 2.5 L0 5 Z" fill="#8c8c8c"/></svg>
<svg style="position:absolute;left:61.6px;top:255.02px" width="9" height="7" viewBox="0 0 9 7"><rect x="0" y="0" width="8.4" height="7" rx="1" fill="#3a8ad6"/><rect x="1.1" y="2" width="2.8" height="1.7" fill="#a6d0f2"/><rect x="4.5" y="2" width="2.8" height="1.7" fill="#a6d0f2"/><rect x="1.1" y="4.4" width="2.8" height="1.6" fill="#e8f3fc"/><rect x="4.5" y="4.4" width="2.8" height="1.6" fill="#e8f3fc"/></svg>
<div style="position:absolute;left:71.2px;top:255.00px;font-family:'Liberation Sans', sans-serif;font-size:8.1px;line-height:8.1px;color:#151515;font-weight:400;white-space:pre;-webkit-text-stroke:0.12px #151515;">inventory</div>
<svg style="position:absolute;left:55.0px;top:265.88px" width="4.5" height="5.5" viewBox="0 0 4.5 5.5"><path d="M0 0 L4.2 2.5 L0 5 Z" fill="#8c8c8c"/></svg>
<svg style="position:absolute;left:61.6px;top:265.58000000000004px" width="9" height="7" viewBox="0 0 9 7"><rect x="0" y="0" width="8.4" height="7" rx="1" fill="#3a8ad6"/><rect x="1.1" y="2" width="2.8" height="1.7" fill="#a6d0f2"/><rect x="4.5" y="2" width="2.8" height="1.7" fill="#a6d0f2"/><rect x="1.1" y="4.4" width="2.8" height="1.6" fill="#e8f3fc"/><rect x="4.5" y="4.4" width="2.8" height="1.6" fill="#e8f3fc"/></svg>
<div style="position:absolute;left:71.2px;top:265.00px;font-family:'Liberation Sans', sans-serif;font-size:8.1px;line-height:8.1px;color:#151515;font-weight:400;white-space:pre;-webkit-text-stroke:0.12px #151515;">language</div>
<svg style="position:absolute;left:55.0px;top:276.44px" width="4.5" height="5.5" viewBox="0 0 4.5 5.5"><path d="M0 0 L4.2 2.5 L0 5 Z" fill="#8c8c8c"/></svg>
<svg style="position:absolute;left:61.6px;top:276.14000000000004px" width="9" height="7" viewBox="0 0 9 7"><rect x="0" y="0" width="8.4" height="7" rx="1" fill="#3a8ad6"/><rect x="1.1" y="2" width="2.8" height="1.7" fill="#a6d0f2"/><rect x="4.5" y="2" width="2.8" height="1.7" fill="#a6d0f2"/><rect x="1.1" y="4.4" width="2.8" height="1.6" fill="#e8f3fc"/><rect x="4.5" y="4.4" width="2.8" height="1.6" fill="#e8f3fc"/></svg>
<div style="position:absolute;left:71.2px;top:276.00px;font-family:'Liberation Sans', sans-serif;font-size:8.1px;line-height:8.1px;color:#151515;font-weight:400;white-space:pre;-webkit-text-stroke:0.12px #151515;">mockada1</div>
<svg style="position:absolute;left:55.0px;top:287.0px" width="4.5" height="5.5" viewBox="0 0 4.5 5.5"><path d="M0 0 L4.2 2.5 L0 5 Z" fill="#8c8c8c"/></svg>
<svg style="position:absolute;left:61.6px;top:286.70000000000005px" width="9" height="7" viewBox="0 0 9 7"><rect x="0" y="0" width="8.4" height="7" rx="1" fill="#3a8ad6"/><rect x="1.1" y="2" width="2.8" height="1.7" fill="#a6d0f2"/><rect x="4.5" y="2" width="2.8" height="1.7" fill="#a6d0f2"/><rect x="1.1" y="4.4" width="2.8" height="1.6" fill="#e8f3fc"/><rect x="4.5" y="4.4" width="2.8" height="1.6" fill="#e8f3fc"/></svg>
<div style="position:absolute;left:71.2px;top:287.00px;font-family:'Liberation Sans', sans-serif;font-size:8.1px;line-height:8.1px;color:#151515;font-weight:400;white-space:pre;-webkit-text-stroke:0.12px #151515;">mockdata</div>
<div style="position:absolute;left:2px;top:289.6px;width:139px;height:1.2px;background:#fff"></div>
<div style="position:absolute;left:1px;top:291px;width:141px;height:3.3px;background:#e8e8e8"></div>
<div style="position:absolute;left:1px;top:290.5px;width:141px;height:1px;background:#c6c6c6"></div>
<div style="position:absolute;left:1px;top:294.3px;width:141px;height:93px;box-sizing:border-box;border:1px solid #c6c6c6;border-radius:5px 5px 0 0;background:#fff;overflow:hidden"></div>
<div style="position:absolute;left:2px;top:295px;width:139px;height:28.3px;background:#e9e9e9"></div>
<div style="position:absolute;left:2px;top:306.8px;width:139px;height:16.5px;background:linear-gradient(#efefef,#e8e8e8)"></div>
<svg style="position:absolute;left:1px;top:294.3px" width="142" height="13.5" viewBox="0 0 142 13.5"><path d="M0.5 13.5 V5 Q0.5 0.5 5 0.5 H88 C95 0.5 97 12.5 105 13 H140.5" fill="#efefef" stroke="#c2c2c2" stroke-width="1"/><path d="M105 13 H140.5" stroke="#d0d0d0" stroke-width="1"/></svg>
<svg style="position:absolute;left:3.5px;top:296.5px" width="9.5" height="9" viewBox="0 0 9.5 9"><rect x="0.5" y="0.5" width="8.5" height="8" rx="1" fill="#8cc0ea" stroke="#3d86d0" stroke-width="0.9"/></svg>
<div style="position:absolute;left:15.4px;top:298.00px;font-family:'Liberation Sans', sans-serif;font-size:8.0px;line-height:8.0px;color:#1e1e1e;font-weight:400;white-space:pre;-webkit-text-stroke:0.12px #1e1e1e;">Project - General</div>
<svg style="position:absolute;left:81px;top:298px" width="7" height="7" viewBox="0 0 7 7"><path d="M1.6 1.6 L5.4 5.4 M5.4 1.6 L1.6 5.4" stroke="#3c3c3c" stroke-width="0.75"/><path d="M0.8 2.2 V0.8 H2.2 M4.8 0.8 H6.2 V2.2 M6.2 4.8 V6.2 H4.8 M2.2 6.2 H0.8 V4.8" stroke="#3c3c3c" stroke-width="1.05" fill="none"/><path d="M2.1 0.9 Q3.5 1.6 4.9 0.9 M2.1 6.1 Q3.5 5.4 4.9 6.1 M0.9 2.1 Q1.6 3.5 0.9 4.9 M6.1 2.1 Q5.4 3.5 6.1 4.9" stroke="#3c3c3c" stroke-width="0.5" fill="none" opacity="0.75"/></svg>
<svg style="position:absolute;left:115.5px;top:297.5px" width="7" height="3" viewBox="0 0 7 3"><rect x="0.5" y="0.5" width="6" height="2" rx="1" fill="#fff" stroke="#555" stroke-width="0.9"/></svg>
<svg style="position:absolute;left:128px;top:297.5px" width="7" height="7" viewBox="0 0 7 7"><rect x="0.5" y="0.5" width="6" height="6" rx="1.2" fill="#fff" stroke="#555" stroke-width="0.9"/><rect x="0.5" y="0.5" width="6" height="1.6" fill="#555"/></svg>
<svg style="position:absolute;left:90.2px;top:311.6px" width="9" height="9" viewBox="0 0 9 9"><path d="M7.63 3.81 L8.86 3.93 L8.86 5.07 L7.63 5.19 L7.46 5.72 L7.20 6.23 L7.99 7.18 L7.18 7.99 L6.23 7.20 L5.72 7.46 L5.19 7.63 L5.07 8.86 L3.93 8.86 L3.81 7.63 L3.28 7.46 L2.77 7.20 L1.82 7.99 L1.01 7.18 L1.80 6.23 L1.54 5.72 L1.37 5.19 L0.14 5.07 L0.14 3.93 L1.37 3.81 L1.54 3.28 L1.80 2.77 L1.01 1.82 L1.82 1.01 L2.77 1.80 L3.28 1.54 L3.81 1.37 L3.93 0.14 L5.07 0.14 L5.19 1.37 L5.72 1.54 L6.23 1.80 L7.18 1.01 L7.99 1.82 L7.20 2.77 L7.46 3.28 Z" fill="#3a8ad6"/><circle cx="4.5" cy="4.5" r="1.3" fill="#efefef"/></svg>
<svg style="position:absolute;left:105px;top:312px" width="7" height="8" viewBox="0 0 7 8"><rect x="0.5" y="0.5" width="6" height="7" fill="#f4f4f4" stroke="#d8d8d8" stroke-width="1"/><path d="M2 4 h3" stroke="#d0d0d0" stroke-width="1"/></svg>
<svg style="position:absolute;left:116.6px;top:312.2px" width="8" height="8" viewBox="0 0 8 8"><rect x="0.5" y="0.5" width="7" height="7" rx="0.8" fill="#e6f0fa" stroke="#a4c6ea" stroke-width="0.9"/><path d="M1.8 4 H6.2 M4 1.8 V6.2" stroke="#5d9ad8" stroke-width="0.9"/></svg>
<svg style="position:absolute;left:128.8px;top:312.6px" width="10" height="7" viewBox="0 0 10 7"><path d="M1.5 5.2 H6" stroke="#45a845" stroke-width="1.1"/><path d="M0 5.2 L2.2 3.8 V6.6 Z" fill="#45a845"/><path d="M4 2.2 H8.5" stroke="#3a8ad6" stroke-width="1.1"/><path d="M10 2.2 L7.8 0.8 V3.6 Z" fill="#3a8ad6"/></svg>
<div style="position:absolute;left:2px;top:323.3px;width:139px;height:8px;background:#fff;border-bottom:1px solid #ececec;box-sizing:border-box"></div>
<div style="position:absolute;left:4.2px;top:325.00px;font-family:'Liberation Sans', sans-serif;font-size:6.8px;line-height:6.8px;color:#1e1e1e;font-weight:400;white-space:pre;-webkit-text-stroke:0.12px #1e1e1e;">Name</div>
<div style="position:absolute;left:72.8px;top:325.00px;font-family:'Liberation Sans', sans-serif;font-size:6.8px;line-height:6.8px;color:#1e1e1e;font-weight:400;white-space:pre;-webkit-text-stroke:0.12px #1e1e1e;">DataSource</div>
<div style="position:absolute;left:71.3px;top:323.5px;width:1px;height:7px;background:#e2e2e2"></div>
<div style="position:absolute;left:110.2px;top:323.5px;width:1px;height:7px;background:#e2e2e2"></div>
<svg style="position:absolute;left:8px;top:334.59999999999997px" width="4.5" height="5.5" viewBox="0 0 4.5 5.5"><path d="M0 0 L4.2 2.5 L0 5 Z" fill="#8c8c8c"/></svg>
<svg style="position:absolute;left:13.8px;top:333.09999999999997px" width="10" height="9" viewBox="0 0 10 9"><path d="M0.5 0.6 H3.6 L4.5 1.6 H9 V7.8 H0.5 Z" fill="#fbd9b8" stroke="#f0902a" stroke-width="1"/><path d="M7.2 5.2 l0.7 1.4 l1.5 0.2 l-1.1 1 l0.3 1.5 l-1.4 -0.7 l-1.4 0.7 l0.3 -1.5 l-1.1 -1 l1.5 -0.2 z" fill="#f07c1e"/></svg>
<div style="position:absolute;left:24.4px;top:334.00px;font-family:'Liberation Sans', sans-serif;font-size:8.0px;line-height:8.0px;color:#151515;font-weight:400;white-space:pre;-webkit-text-stroke:0.12px #151515;">Bookmarks</div>
<svg style="position:absolute;left:8px;top:345.2px" width="4.5" height="5.5" viewBox="0 0 4.5 5.5"><path d="M0 0 L4.2 2.5 L0 5 Z" fill="#8c8c8c"/></svg>
<svg style="position:absolute;left:14.2px;top:344.0px" width="9" height="8" viewBox="0 0 9 8"><path d="M0 0.6 H3.2 L4 1.4 H9 V7.4 H0 Z" fill="#f0902a"/><path d="M1.6 4.6 H3.8 M5.2 4.6 H7.4" stroke="#fde3c6" stroke-width="1.1"/></svg>
<div style="position:absolute;left:24.4px;top:345.00px;font-family:'Liberation Sans', sans-serif;font-size:8.0px;line-height:8.0px;color:#151515;font-weight:400;white-space:pre;-webkit-text-stroke:0.12px #151515;">ER Diagrams</div>
<svg style="position:absolute;left:8px;top:355.79999999999995px" width="4.5" height="5.5" viewBox="0 0 4.5 5.5"><path d="M0 0 L4.2 2.5 L0 5 Z" fill="#8c8c8c"/></svg>
<svg style="position:absolute;left:14.6px;top:354.29999999999995px" width="9" height="9" viewBox="0 0 9 9"><rect x="3.8" y="0.5" width="4.6" height="4.6" rx="0.8" fill="#8cc4ee" stroke="#3a8ad6" stroke-width="0.9"/><rect x="0.5" y="3.8" width="4.6" height="4.6" rx="0.8" fill="#8cc4ee" stroke="#3a8ad6" stroke-width="0.9"/><path d="M3 5.5 L6 3" stroke="#fff" stroke-width="0.8"/></svg>
<div style="position:absolute;left:24.4px;top:355.00px;font-family:'Liberation Sans', sans-serif;font-size:8.0px;line-height:8.0px;color:#151515;font-weight:400;white-space:pre;-webkit-text-stroke:0.12px #151515;">Scripts</div>
<svg style="position:absolute;left:205px;top:32px" width="5" height="14" viewBox="0 0 5 14"><path d="M0.5 14 V4 Q0.5 0.5 4 0.5" stroke="#c4c4c4" stroke-width="1" fill="none"/></svg>
<svg style="position:absolute;left:292.5px;top:32px" width="5" height="14" viewBox="0 0 5 14"><path d="M0.5 14 V4 Q0.5 0.5 4 0.5" stroke="#c4c4c4" stroke-width="1" fill="none"/></svg>
<svg style="position:absolute;left:382px;top:32px" width="5" height="14" viewBox="0 0 5 14"><path d="M0.5 14 V4 Q0.5 0.5 4 0.5" stroke="#c4c4c4" stroke-width="1" fill="none"/></svg>
<svg style="position:absolute;left:469px;top:32px" width="5" height="14" viewBox="0 0 5 14"><path d="M0.5 14 V4 Q0.5 0.5 4 0.5" stroke="#c4c4c4" stroke-width="1" fill="none"/></svg>
<svg style="position:absolute;left:145.5px;top:35.5px" width="11" height="7" viewBox="0 0 11 7"><path d="M0 0.8 h7 M0 2.8 h6 M0 4.8 h4" stroke="#5a9ad8" stroke-width="1"/><path d="M5.5 4.5 l1.5 1.5 l3 -4" stroke="#3aa03a" stroke-width="1.2" fill="none"/></svg>
<div style="position:absolute;left:158px;top:36.00px;font-family:'Liberation Sans', sans-serif;font-size:8.05px;line-height:8.05px;color:#1e1e1e;font-weight:400;white-space:pre;-webkit-text-stroke:0.12px #1e1e1e;">category</div>
<svg style="position:absolute;left:208.5px;top:34.5px" width="10" height="10" viewBox="0 0 10 10"><g opacity="1" fill="none" stroke="#3a8ad6" stroke-width="1.25" stroke-linecap="round"><path d="M2.3 8.6 V1.2 H8.2 Q9.2 1.2 9.2 2.1 Q9.2 2.7 8.4 2.7 H7"/><path d="M7 1.4 V8.6"/><path d="M7 8.9 H1.4 Q0.5 8.9 0.5 8.1 Q0.5 7.5 1.2 7.5 H2.3"/></g></svg>
<div style="position:absolute;left:219.6px;top:36.00px;font-family:'Liberation Sans', sans-serif;font-size:8.05px;line-height:8.05px;color:#1e1e1e;font-weight:400;white-space:pre;-webkit-text-stroke:0.12px #1e1e1e;">&lt;SQLite - Chino</div>
<svg style="position:absolute;left:296.2px;top:34.2px" width="7" height="10" viewBox="0 0 7 10"><path d="M0.6 8.6 Q1.8 9.2 2.6 7.6 L4.2 2 Q4.9 0.5 6.6 1.1" stroke="#3a8ad6" stroke-width="1.15" fill="none" stroke-linecap="round"/><path d="M1.8 3.6 H5.6" stroke="#3a8ad6" stroke-width="1"/></svg>
<div style="position:absolute;left:306.4px;top:36.00px;font-family:'Liberation Sans', sans-serif;font-size:8.05px;line-height:8.05px;color:#1e1e1e;font-weight:400;white-space:pre;-webkit-text-stroke:0.12px #1e1e1e;">get_customer_ba</div>
<svg style="position:absolute;left:385.5px;top:34.2px" width="7" height="10" viewBox="0 0 7 10"><path d="M0.6 8.6 Q1.8 9.2 2.6 7.6 L4.2 2 Q4.9 0.5 6.6 1.1" stroke="#3a8ad6" stroke-width="1.15" fill="none" stroke-linecap="round"/><path d="M1.8 3.6 H5.6" stroke="#3a8ad6" stroke-width="1"/></svg>
<div style="position:absolute;left:395.7px;top:36.00px;font-family:'Liberation Sans', sans-serif;font-size:8.05px;line-height:8.05px;color:#1e1e1e;font-weight:400;white-space:pre;-webkit-text-stroke:0.12px #1e1e1e;">group_concat(te</div>
<svg style="position:absolute;left:472.5px;top:34.2px" width="7" height="10" viewBox="0 0 7 10"><path d="M0.6 8.6 Q1.8 9.2 2.6 7.6 L4.2 2 Q4.9 0.5 6.6 1.1" stroke="#3a8ad6" stroke-width="1.15" fill="none" stroke-linecap="round"/><path d="M1.8 3.6 H5.6" stroke="#3a8ad6" stroke-width="1"/></svg>
<div style="position:absolute;left:483px;top:36.00px;font-family:'Liberation Sans', sans-serif;font-size:8.05px;line-height:8.05px;color:#1e1e1e;font-weight:400;white-space:pre;-webkit-text-stroke:0.12px #1e1e1e;">rewards_report(</div>
<svg style="position:absolute;left:555px;top:32px" width="104" height="15" viewBox="0 0 104 15"><defs><linearGradient id="ag" x1="0" y1="0" x2="0" y2="1"><stop offset="0" stop-color="#e2eefb"/><stop offset="1" stop-color="#6ea8e6"/></linearGradient></defs><path d="M0.5 15 V5 Q0.5 0.5 5 0.5 H84 C92 0.5 94 13.5 103 14 V15 Z" fill="url(#ag)" stroke="#9cc0e6" stroke-width="0.8"/></svg>
<svg style="position:absolute;left:558px;top:34.5px" width="10" height="10" viewBox="0 0 10 10"><g opacity="1" fill="none" stroke="#2f7ad0" stroke-width="1.25" stroke-linecap="round"><path d="M2.3 8.6 V1.2 H8.2 Q9.2 1.2 9.2 2.1 Q9.2 2.7 8.4 2.7 H7"/><path d="M7 1.4 V8.6"/><path d="M7 8.9 H1.4 Q0.5 8.9 0.5 8.1 Q0.5 7.5 1.2 7.5 H2.3"/></g></svg>
<div style="position:absolute;left:570px;top:35.00px;font-family:'Liberation Sans', sans-serif;font-size:8.0px;line-height:8.0px;color:#111;font-weight:400;white-space:pre;-webkit-text-stroke:0.12px #111;">*&lt;PostgreSQL -</div>
<svg style="position:absolute;left:633px;top:36px" width="7" height="7" viewBox="0 0 7 7"><path d="M1.6 1.6 L5.4 5.4 M5.4 1.6 L1.6 5.4" stroke="#333" stroke-width="0.75"/><path d="M0.8 2.2 V0.8 H2.2 M4.8 0.8 H6.2 V2.2 M6.2 4.8 V6.2 H4.8 M2.2 6.2 H0.8 V4.8" stroke="#333" stroke-width="1.05" fill="none"/><path d="M2.1 0.9 Q3.5 1.6 4.9 0.9 M2.1 6.1 Q3.5 5.4 4.9 6.1 M0.9 2.1 Q1.6 3.5 0.9 4.9 M6.1 2.1 Q5.4 3.5 6.1 4.9" stroke="#333" stroke-width="0.5" fill="none" opacity="0.75"/></svg>
<svg style="position:absolute;left:659.5px;top:34.8px" width="5" height="3.5" viewBox="0 0 5 3.5"><path d="M0.4 0.4 L2 1.6 L0.4 2.8 M2.4 0.4 L4 1.6 L2.4 2.8" stroke="#333" stroke-width="0.8" fill="none"/></svg>
<div style="position:absolute;left:663.8px;top:38.00px;font-family:'Liberation Sans', sans-serif;font-size:6.4px;line-height:6.4px;color:#333;font-weight:400;white-space:pre;-webkit-text-stroke:0.12px #333;">4</div>
<svg style="position:absolute;left:724.8px;top:35px" width="7" height="3" viewBox="0 0 7 3"><rect x="0.5" y="0.5" width="6" height="2" rx="1" fill="#fff" stroke="#555" stroke-width="0.9"/></svg>
<svg style="position:absolute;left:738px;top:35px" width="7" height="7" viewBox="0 0 7 7"><rect x="0.5" y="0.5" width="6" height="6" rx="1.2" fill="#fff" stroke="#555" stroke-width="0.9"/><rect x="0.5" y="0.5" width="6" height="1.6" fill="#555"/></svg>
<div style="position:absolute;left:144px;top:46px;width:606.7px;height:341px;border:1px solid #4a90dc;box-sizing:border-box;background:#e8e8e8"></div>
<div style="position:absolute;left:145px;top:47px;width:604.7px;height:218px;background:#fff"></div>
<div style="position:absolute;left:145.4px;top:47px;width:6.3px;height:218px;background:#e6e6e6"></div>
<div style="position:absolute;left:159.2px;top:47px;width:4.8px;height:218px;background:#e3e3f0"></div>
<div style="position:absolute;left:169px;top:47px;width:1px;height:218px;background:#f0f0f0"></div>
<div style="position:absolute;left:742.6px;top:47px;width:6.9px;height:218px;background:#e8e8e8"></div>
<div style="position:absolute;left:742.6px;top:47px;width:6.6px;height:212.8px;background:#e8e8f4;border:1px solid #d6d6ea;border-top:none;box-sizing:border-box"></div>
<div style="position:absolute;left:170.5px;top:240.9px;width:572.3px;height:8.9px;background:#e8f2fe"></div>
<div style="position:absolute;left:170.8px;top:50.00px;font-family:'Liberation Mono', monospace;font-size:6.47px;line-height:6.47px;color:#222;font-weight:400;white-space:pre;-webkit-text-stroke:0.2px currentColor"><span style="color:#9a2030;-webkit-text-stroke:0.2px #9a2030">CREATE OR REPLACE FUNCTION</span><span style="color:#222;-webkit-text-stroke:0.2px #222"> public.rewards_report(min_monthly_purchases </span><span style="color:#2c2c9c;-webkit-text-stroke:0.2px #2c2c9c">integer</span><span style="color:#222;-webkit-text-stroke:0.2px #222">, min_dollar_amount_purchased </span><span style="color:#2c2c9c;-webkit-text-stroke:0.2px #2c2c9c">numeric</span><span style="color:#222;-webkit-text-stroke:0.2px #222">)</span></div>
<div style="position:absolute;left:170.8px;top:59.00px;font-family:'Liberation Mono', monospace;font-size:6.47px;line-height:6.47px;color:#222;font-weight:400;white-space:pre;-webkit-text-stroke:0.2px currentColor"><span style="color:#9a2030;-webkit-text-stroke:0.2px #9a2030"> RETURNS SETOF</span><span style="color:#222;-webkit-text-stroke:0.2px #222"> customer</span></div>
<div style="position:absolute;left:170.8px;top:68.00px;font-family:'Liberation Mono', monospace;font-size:6.47px;line-height:6.47px;color:#222;font-weight:400;white-space:pre;-webkit-text-stroke:0.2px currentColor"><span style="color:#9a2030;-webkit-text-stroke:0.2px #9a2030"> LANGUAGE</span><span style="color:#222;-webkit-text-stroke:0.2px #222"> plpgsql</span></div>
<div style="position:absolute;left:170.8px;top:76.00px;font-family:'Liberation Mono', monospace;font-size:6.47px;line-height:6.47px;color:#222;font-weight:400;white-space:pre;-webkit-text-stroke:0.2px currentColor"><span style="color:#9a2030;-webkit-text-stroke:0.2px #9a2030"> SECURITY DEFINER</span></div>
<div style="position:absolute;left:170.8px;top:85.00px;font-family:'Liberation Mono', monospace;font-size:6.47px;line-height:6.47px;color:#222;font-weight:400;white-space:pre;-webkit-text-stroke:0.2px currentColor"><span style="color:#9a2030;-webkit-text-stroke:0.2px #9a2030">AS </span><span style="color:#e02040;-webkit-text-stroke:0.2px #e02040">$function$</span></div>
<div style="position:absolute;left:170.8px;top:94.00px;font-family:'Liberation Mono', monospace;font-size:6.47px;line-height:6.47px;color:#222;font-weight:400;white-space:pre;-webkit-text-stroke:0.2px currentColor"><span style="color:#9a2030;-webkit-text-stroke:0.2px #9a2030">DECLARE</span></div>
<div style="position:absolute;left:170.8px;top:103.00px;font-family:'Liberation Mono', monospace;font-size:6.47px;line-height:6.47px;color:#222;font-weight:400;white-space:pre;-webkit-text-stroke:0.2px currentColor"><span style="color:#222;-webkit-text-stroke:0.2px #222">    last_month_start </span><span style="color:#2c2c9c;-webkit-text-stroke:0.2px #2c2c9c">DATE</span><span style="color:#e02040;-webkit-text-stroke:0.2px #e02040">;</span></div>
<div style="position:absolute;left:170.8px;top:112.00px;font-family:'Liberation Mono', monospace;font-size:6.47px;line-height:6.47px;color:#222;font-weight:400;white-space:pre;-webkit-text-stroke:0.2px currentColor"><span style="color:#222;-webkit-text-stroke:0.2px #222">    last_month_end </span><span style="color:#2c2c9c;-webkit-text-stroke:0.2px #2c2c9c">DATE</span><span style="color:#e02040;-webkit-text-stroke:0.2px #e02040">;</span></div>
<div style="position:absolute;left:170.8px;top:120.00px;font-family:'Liberation Mono', monospace;font-size:6.47px;line-height:6.47px;color:#222;font-weight:400;white-space:pre;-webkit-text-stroke:0.2px currentColor"><span style="color:#222;-webkit-text-stroke:0.2px #222">rr RECORD</span><span style="color:#e02040;-webkit-text-stroke:0.2px #e02040">;</span></div>
<div style="position:absolute;left:170.8px;top:129.00px;font-family:'Liberation Mono', monospace;font-size:6.47px;line-height:6.47px;color:#222;font-weight:400;white-space:pre;-webkit-text-stroke:0.2px currentColor"><span style="color:#222;-webkit-text-stroke:0.2px #222">tmpSQL </span><span style="color:#2c2c9c;-webkit-text-stroke:0.2px #2c2c9c">TEXT</span><span style="color:#e02040;-webkit-text-stroke:0.2px #e02040">;</span></div>
<div style="position:absolute;left:170.8px;top:138.00px;font-family:'Liberation Mono', monospace;font-size:6.47px;line-height:6.47px;color:#222;font-weight:400;white-space:pre;-webkit-text-stroke:0.2px currentColor"><span style="color:#9a2030;-webkit-text-stroke:0.2px #9a2030">BEGIN</span></div>
<div style="position:absolute;left:170.8px;top:156.00px;font-family:'Liberation Mono', monospace;font-size:6.47px;line-height:6.47px;color:#222;font-weight:400;white-space:pre;-webkit-text-stroke:0.2px currentColor"><span style="color:#808080;-webkit-text-stroke:0.2px #808080">    /* Some sanity checks... */</span></div>
<div style="position:absolute;left:170.8px;top:164.00px;font-family:'Liberation Mono', monospace;font-size:6.47px;line-height:6.47px;color:#222;font-weight:400;white-space:pre;-webkit-text-stroke:0.2px currentColor"><span style="color:#9a2030;-webkit-text-stroke:0.2px #9a2030">    IF</span><span style="color:#222;-webkit-text-stroke:0.2px #222"> min_monthly_purchases = </span><span style="color:#1a3cf0;-webkit-text-stroke:0.2px #1a3cf0">0</span><span style="color:#9a2030;-webkit-text-stroke:0.2px #9a2030"> THEN</span></div>
<div style="position:absolute;left:170.8px;top:173.00px;font-family:'Liberation Mono', monospace;font-size:6.47px;line-height:6.47px;color:#222;font-weight:400;white-space:pre;-webkit-text-stroke:0.2px currentColor"><span style="color:#9a2030;-webkit-text-stroke:0.2px #9a2030">        RAISE EXCEPTION </span><span style="color:#2a8a2a;-webkit-text-stroke:0.2px #2a8a2a">'Minimum monthly purchases parameter must be &gt; 0'</span><span style="color:#e02040;-webkit-text-stroke:0.2px #e02040">;</span></div>
<div style="position:absolute;left:170.8px;top:182.00px;font-family:'Liberation Mono', monospace;font-size:6.47px;line-height:6.47px;color:#222;font-weight:400;white-space:pre;-webkit-text-stroke:0.2px currentColor"><span style="color:#9a2030;-webkit-text-stroke:0.2px #9a2030">    END IF</span><span style="color:#e02040;-webkit-text-stroke:0.2px #e02040">;</span></div>
<div style="position:absolute;left:170.8px;top:191.00px;font-family:'Liberation Mono', monospace;font-size:6.47px;line-height:6.47px;color:#222;font-weight:400;white-space:pre;-webkit-text-stroke:0.2px currentColor"><span style="color:#9a2030;-webkit-text-stroke:0.2px #9a2030">    IF</span><span style="color:#222;-webkit-text-stroke:0.2px #222"> min_dollar_amount_purchased = </span><span style="color:#1a3cf0;-webkit-text-stroke:0.2px #1a3cf0">0.00</span><span style="color:#9a2030;-webkit-text-stroke:0.2px #9a2030"> THEN</span></div>
<div style="position:absolute;left:170.8px;top:200.00px;font-family:'Liberation Mono', monospace;font-size:6.47px;line-height:6.47px;color:#222;font-weight:400;white-space:pre;-webkit-text-stroke:0.2px currentColor"><span style="color:#9a2030;-webkit-text-stroke:0.2px #9a2030">        RAISE EXCEPTION </span><span style="color:#2a8a2a;-webkit-text-stroke:0.2px #2a8a2a">'Minimum monthly dollar amount purchased parameter must be &gt; $0.00'</span><span style="color:#e02040;-webkit-text-stroke:0.2px #e02040">;</span></div>
<div style="position:absolute;left:170.8px;top:208.00px;font-family:'Liberation Mono', monospace;font-size:6.47px;line-height:6.47px;color:#222;font-weight:400;white-space:pre;-webkit-text-stroke:0.2px currentColor"><span style="color:#9a2030;-webkit-text-stroke:0.2px #9a2030">    END IF</span><span style="color:#e02040;-webkit-text-stroke:0.2px #e02040">;</span></div>
<div style="position:absolute;left:170.8px;top:226.00px;font-family:'Liberation Mono', monospace;font-size:6.47px;line-height:6.47px;color:#222;font-weight:400;white-space:pre;-webkit-text-stroke:0.2px currentColor"><span style="color:#222;-webkit-text-stroke:0.2px #222">    last_month_start := </span><span style="color:#2c2c9c;-webkit-text-stroke:0.2px #2c2c9c">CURRENT_DATE</span><span style="color:#222;-webkit-text-stroke:0.2px #222"> - </span><span style="color:#2a8a2a;-webkit-text-stroke:0.2px #2a8a2a">'3 month'</span><span style="color:#9a2030;-webkit-text-stroke:0.2px #9a2030">::interval</span><span style="color:#e02040;-webkit-text-stroke:0.2px #e02040">;</span></div>
<div style="position:absolute;left:170.8px;top:235.00px;font-family:'Liberation Mono', monospace;font-size:6.47px;line-height:6.47px;color:#222;font-weight:400;white-space:pre;-webkit-text-stroke:0.2px currentColor"><span style="color:#222;-webkit-text-stroke:0.2px #222">    last_month_start := to_date((</span><span style="color:#9a2030;-webkit-text-stroke:0.2px #9a2030">extract</span><span style="color:#222;-webkit-text-stroke:0.2px #222">(</span><span style="color:#9a2030;-webkit-text-stroke:0.2px #9a2030">YEAR FROM</span><span style="color:#222;-webkit-text-stroke:0.2px #222"> last_month_start) || </span><span style="color:#2a8a2a;-webkit-text-stroke:0.2px #2a8a2a">'-'</span><span style="color:#222;-webkit-text-stroke:0.2px #222"> || </span><span style="color:#9a2030;-webkit-text-stroke:0.2px #9a2030">extract</span><span style="color:#222;-webkit-text-stroke:0.2px #222">(</span><span style="color:#9a2030;-webkit-text-stroke:0.2px #9a2030">MONTH FROM</span><span style="color:#222;-webkit-text-stroke:0.2px #222"> last_month_start) || </span><span style="color:#2a8a2a;-webkit-text-stroke:0.2px #2a8a2a">'-01'</span><span style="color:#222;-webkit-text-stroke:0.2px #222">),</span><span style="color:#2a8a2a;-webkit-text-stroke:0.2px #2a8a2a">'YYYY-MM-DD'</span><span style="color:#e02040;-webkit-text-stroke:0.2px #e02040">);</span></div>
<div style="position:absolute;left:170.8px;top:244.00px;font-family:'Liberation Mono', monospace;font-size:6.47px;line-height:6.47px;color:#222;font-weight:400;white-space:pre;-webkit-text-stroke:0.2px currentColor"><span style="color:#222;-webkit-text-stroke:0.2px #222">    last_month_end := LAST_DAY(last_month_start)</span><span style="color:#e02040;-webkit-text-stroke:0.2px #e02040">;</span></div>
<div style="position:absolute;left:170.8px;top:261.00px;font-family:'Liberation Mono', monospace;font-size:6.47px;line-height:6.47px;color:#222;font-weight:400;white-space:pre;-webkit-text-stroke:0.2px currentColor"><span style="color:#808080;-webkit-text-stroke:0.2px #808080">    /*</span></div>
<div style="position:absolute;left:360.8px;top:241.5px;width:0.9px;height:7.5px;background:#000"></div>
<div style="position:absolute;left:145px;top:265px;width:604.7px;height:121.3px;background:#e8e8e8"></div>
<svg style="position:absolute;left:441px;top:265.9px" width="13" height="2.6" viewBox="0 0 13 2.6"><path d="M0 2.4 L2.15 0.2 L4.3 2.4 Z" fill="#5b5ea6"/><path d="M8 0.2 H12.3 L10.15 2.4 Z" fill="#5b5ea6"/></svg>
<div style="position:absolute;left:145px;top:268.3px;width:604.7px;height:13.2px;background:#e7e7e7"></div>
<svg style="position:absolute;left:147.8px;top:270.6px" width="9" height="10" viewBox="0 0 9 10"><path d="M0.5 0.6 H5.4 L7.8 3 V9.4 H0.5 Z" fill="#9ccbf0" stroke="#3a8ad6" stroke-width="0.8"/><path d="M2.6 1.6 V8.6 M4.6 1.6 V8.6" stroke="#fff" stroke-width="0.7"/><path d="M1.6 1.6 V8.6 M3.6 1.6 V8.6 M5.6 3 V8.6" stroke="#4a95dc" stroke-width="0.5"/></svg>
<div style="position:absolute;left:159px;top:272.00px;font-family:'Liberation Sans', sans-serif;font-size:8.1px;line-height:8.1px;color:#1e1e1e;font-weight:400;white-space:pre;-webkit-text-stroke:0.12px #1e1e1e;letter-spacing:0.03px">Results</div>
<div style="position:absolute;left:188px;top:268px;width:75.5px;height:13.5px;background:#eeeeee;border:1px solid #c6c6c6;border-bottom:none;box-sizing:border-box;border-radius:2px 2px 0 0"></div>
<svg style="position:absolute;left:191px;top:270.6px" width="9" height="10" viewBox="0 0 9 10"><path d="M0.5 0.6 H5.4 L7.8 3 V9.4 H0.5 Z" fill="#9ccbf0" stroke="#3a8ad6" stroke-width="0.8"/><path d="M2.6 1.6 V8.6 M4.6 1.6 V8.6" stroke="#fff" stroke-width="0.7"/><path d="M1.6 1.6 V8.6 M3.6 1.6 V8.6 M5.6 3 V8.6" stroke="#4a95dc" stroke-width="0.5"/></svg>
<div style="position:absolute;left:202.3px;top:272.00px;font-family:'Liberation Sans', sans-serif;font-size:8.1px;line-height:8.1px;color:#1e1e1e;font-weight:400;white-space:pre;-webkit-text-stroke:0.12px #1e1e1e;letter-spacing:0.1px">Statistics - 2</div>
<svg style="position:absolute;left:251.8px;top:272.5px" width="7" height="7" viewBox="0 0 7 7"><path d="M1.6 1.6 L5.4 5.4 M5.4 1.6 L1.6 5.4" stroke="#3c3c3c" stroke-width="0.75"/><path d="M0.8 2.2 V0.8 H2.2 M4.8 0.8 H6.2 V2.2 M6.2 4.8 V6.2 H4.8 M2.2 6.2 H0.8 V4.8" stroke="#3c3c3c" stroke-width="1.05" fill="none"/><path d="M2.1 0.9 Q3.5 1.6 4.9 0.9 M2.1 6.1 Q3.5 5.4 4.9 6.1 M0.9 2.1 Q1.6 3.5 0.9 4.9 M6.1 2.1 Q5.4 3.5 6.1 4.9" stroke="#3c3c3c" stroke-width="0.5" fill="none" opacity="0.75"/></svg>
<div style="position:absolute;left:145px;top:281.5px;width:604.7px;height:1px;background:#d4d4d4"></div>
<svg style="position:absolute;left:686px;top:270.5px" width="9" height="10" viewBox="0 0 9 10"><path d="M0.5 0.5 h5 l3 3 v6 h-8 z" fill="#fff" stroke="#3d86d0" stroke-width="0.9"/><rect x="4.5" y="5.5" width="4" height="4" fill="#e02020"/></svg>
<div style="position:absolute;left:696px;top:273.00px;font-family:'Liberation Sans', sans-serif;font-size:7.1px;line-height:7.1px;color:#1e1e1e;font-weight:400;white-space:pre;-webkit-text-stroke:0.12px #1e1e1e;">Log</div>
<svg style="position:absolute;left:713.2px;top:270.5px" width="9" height="10" viewBox="0 0 9 10"><path d="M0.5 0.5 h5 l3 3 v6 h-8 z" fill="#fff" stroke="#3d86d0" stroke-width="0.9"/><path d="M2 6 h4" stroke="#3d86d0" stroke-width="0.9"/></svg>
<div style="position:absolute;left:723.7px;top:272.00px;font-family:'Liberation Sans', sans-serif;font-size:7.0px;line-height:7.0px;color:#1e1e1e;font-weight:400;white-space:pre;-webkit-text-stroke:0.12px #1e1e1e;">Output</div>
<div style="position:absolute;left:145px;top:282.5px;width:604.7px;height:16px;background:#ececec"></div>
<div style="position:absolute;left:146.9px;top:284.1px;width:481.3px;height:12.9px;background:#fff;border:1px solid #d2d2d2;box-sizing:border-box"></div>
<svg style="position:absolute;left:148.8px;top:286.8px" width="10" height="8" viewBox="0 0 10 8"><path d="M2 2.9 L0.6 4.1 L2 5.3" stroke="#6aaae6" stroke-width="0.8" fill="none"/><circle cx="2.6" cy="4.1" r="0.45" fill="#6aaae6"/><path d="M3.3 0.6 H8.9 M3.3 0.4 V1.6 M8.9 0.4 V1.6" stroke="#5aa0e0" stroke-width="0.9"/><path d="M6.1 0.6 V6.8" stroke="#5aa0e0" stroke-width="1.3"/><path d="M5 6.9 H7.2" stroke="#5aa0e0" stroke-width="0.8"/></svg>
<div style="position:absolute;left:159.8px;top:287.00px;font-family:'Liberation Sans', sans-serif;font-size:7.25px;line-height:7.25px;color:#2f922f;font-weight:400;white-space:pre;-webkit-text-stroke:0.15px #2f922f">CREATE OR REPLACE FUNCTION</div>
<div style="position:absolute;left:281.5px;top:286.5px;width:0.8px;height:8px;background:#c8c8c8"></div>
<div style="position:absolute;left:286px;top:287.00px;font-family:'Liberation Sans', sans-serif;font-size:7.95px;line-height:7.95px;color:#a8a8a8;font-weight:400;white-space:pre;-webkit-text-stroke:0.12px #a8a8a8;font-style:italic">Enter a SQL expression to filter results (use Ctrl+Space)</div>
<svg style="position:absolute;left:600.5px;top:289px" width="5.5" height="3.5" viewBox="0 0 5.5 3.5"><path d="M0 0 L5.5 0 L2.75 3.5 Z" fill="#555"/></svg>
<div style="position:absolute;left:610.3px;top:286.5px;width:0.8px;height:8px;background:#c8c8c8"></div>
<svg style="position:absolute;left:613.8px;top:286px" width="10" height="9" viewBox="0 0 10 9"><path d="M1 4 v-2 h7 M6.5 0.5 l1.8 1.5 l-1.8 1.5 M9 5 v2 h-7 M3.5 5.5 l-1.8 1.5 l1.8 1.5" stroke="#555" stroke-width="1" fill="none"/></svg>
<svg style="position:absolute;left:632.5px;top:286.5px" width="10" height="9" viewBox="0 0 10 9"><path d="M0.5 0.5 h8 l-3 4 v4 l-2 -1 v-3 z" fill="#bcdaf2" stroke="#78b0e2" stroke-width="0.7"/><path d="M5.5 7 l1 1 l2 -2.5" stroke="#3aa03a" stroke-width="1" fill="none"/></svg>
<svg style="position:absolute;left:645px;top:286.5px" width="10" height="9" viewBox="0 0 10 9"><path d="M0.5 0.5 h8 l-3 4 v4 l-2 -1 v-3 z" fill="#bcdaf2" stroke="#78b0e2" stroke-width="0.7"/><path d="M6 5.5 l3 3 M9 5.5 l-3 3" stroke="#e04040" stroke-width="1"/></svg>
<svg style="position:absolute;left:657.8px;top:286.5px" width="10" height="9" viewBox="0 0 10 9"><path d="M0.5 0.5 h8 l-3 4 v4 l-2 -1 v-3 z" fill="#bcdaf2" stroke="#78b0e2" stroke-width="0.7"/><rect x="6" y="5.5" width="3" height="3" fill="none" stroke="#3aa03a" stroke-width="0.9"/></svg>
<svg style="position:absolute;left:672.5px;top:286.5px" width="10" height="9" viewBox="0 0 10 9"><path d="M0.5 0.5 h8 l-3 4 v4 l-2 -1 v-3 z" fill="#bcdaf2" stroke="#78b0e2" stroke-width="0.7"/></svg>
<svg style="position:absolute;left:684px;top:286px" width="1" height="10" viewBox="0 0 1 10"><rect x="0" y="0.0" width="1" height="1" fill="#a8a8a8"/><rect x="0" y="2.5" width="1" height="1" fill="#a8a8a8"/><rect x="0" y="5.0" width="1" height="1" fill="#a8a8a8"/><rect x="0" y="7.5" width="1" height="1" fill="#a8a8a8"/></svg>
<svg style="position:absolute;left:687.5px;top:286px" width="10" height="10" viewBox="0 0 10 10"><circle cx="4.5" cy="4.5" r="3.5" fill="#bcdaf2" stroke="#78b0e2" stroke-width="1.2" stroke-dasharray="1.4 0.8"/><path d="M6 6 l3 2 l-3 2 z" fill="#3aa03a"/></svg>
<svg style="position:absolute;left:698.5px;top:290px" width="3" height="2.5" viewBox="0 0 3 2.5"><path d="M0 0 L3 0 L1.5 2.5 Z" fill="#333"/></svg>
<svg style="position:absolute;left:705.5px;top:286px" width="1" height="10" viewBox="0 0 1 10"><rect x="0" y="0.0" width="1" height="1" fill="#a8a8a8"/><rect x="0" y="2.5" width="1" height="1" fill="#a8a8a8"/><rect x="0" y="5.0" width="1" height="1" fill="#a8a8a8"/><rect x="0" y="7.5" width="1" height="1" fill="#a8a8a8"/></svg>
<svg style="position:absolute;left:709px;top:287.5px" width="10" height="7" viewBox="0 0 10 7"><path d="M0.5 3.5 L4 0.5 v2 h5.5 v2 h-5.5 v2 z" fill="#6cc06c"/></svg>
<svg style="position:absolute;left:719.8px;top:290px" width="3" height="2.5" viewBox="0 0 3 2.5"><path d="M0 0 L3 0 L1.5 2.5 Z" fill="#333"/></svg>
<svg style="position:absolute;left:726.5px;top:287.5px" width="10" height="7" viewBox="0 0 10 7"><path d="M9.5 3.5 L6 0.5 v2 h-5.5 v2 h5.5 v2 z" fill="#6cc06c"/></svg>
<svg style="position:absolute;left:737.4px;top:290px" width="3" height="2.5" viewBox="0 0 3 2.5"><path d="M0 0 L3 0 L1.5 2.5 Z" fill="#333"/></svg>
<div style="position:absolute;left:145px;top:298.5px;width:604.7px;height:57.5px;background:#fff"></div>
<div style="position:absolute;left:145px;top:298.5px;width:604.7px;height:1.4px;background:#d9d9d9"></div>
<div style="position:absolute;left:146.5px;top:302.00px;font-family:'Liberation Sans', sans-serif;font-size:6.75px;line-height:6.75px;color:#1e1e1e;font-weight:400;white-space:pre;-webkit-text-stroke:0.12px #1e1e1e;">Name</div>
<div style="position:absolute;left:268.5px;top:302.00px;font-family:'Liberation Sans', sans-serif;font-size:6.75px;line-height:6.75px;color:#1e1e1e;font-weight:400;white-space:pre;-webkit-text-stroke:0.12px #1e1e1e;">Value</div>
<div style="position:absolute;left:145px;top:309.3px;width:604.7px;height:0.8px;background:#ececec"></div>
<div style="position:absolute;left:146.5px;top:312.00px;font-family:'Liberation Sans', sans-serif;font-size:7.95px;line-height:7.95px;color:#1a1a1a;font-weight:400;white-space:pre;-webkit-text-stroke:0.12px #1a1a1a;">Updated Rows</div>
<div style="position:absolute;left:268.5px;top:312.00px;font-family:'Liberation Sans', sans-serif;font-size:8.1px;line-height:8.1px;color:#1a1a1a;font-weight:400;white-space:pre;-webkit-text-stroke:0.12px #1a1a1a;letter-spacing:0.08px">0</div>
<div style="position:absolute;left:145px;top:320.7px;width:604.7px;height:10.5px;background:#f3f3f3"></div>
<div style="position:absolute;left:146.5px;top:322.00px;font-family:'Liberation Sans', sans-serif;font-size:7.95px;line-height:7.95px;color:#1a1a1a;font-weight:400;white-space:pre;-webkit-text-stroke:0.12px #1a1a1a;">Query</div>
<div style="position:absolute;left:268.5px;top:322.00px;font-family:'Liberation Sans', sans-serif;font-size:7.4px;line-height:7.4px;color:#1a1a1a;font-weight:400;white-space:pre;-webkit-text-stroke:0.12px #1a1a1a;">CREATE OR REPLACE FUNCTION</div>
<div style="position:absolute;left:389.0px;top:322.00px;font-family:'Liberation Sans', sans-serif;font-size:7.92px;line-height:7.92px;color:#1a1a1a;font-weight:400;white-space:pre;-webkit-text-stroke:0.12px #1a1a1a;">public.rewards_report(min_monthly_purchases integer, min_dollar_amount_purcha...</div>
<div style="position:absolute;left:146.5px;top:333.00px;font-family:'Liberation Sans', sans-serif;font-size:7.95px;line-height:7.95px;color:#1a1a1a;font-weight:400;white-space:pre;-webkit-text-stroke:0.12px #1a1a1a;">Finish time</div>
<div style="position:absolute;left:268.5px;top:333.00px;font-family:'Liberation Sans', sans-serif;font-size:8.1px;line-height:8.1px;color:#1a1a1a;font-weight:400;white-space:pre;-webkit-text-stroke:0.12px #1a1a1a;letter-spacing:0.08px">Mon Mar 05 14:22:39 MSK 2018</div>
<div style="position:absolute;left:145px;top:341.7px;width:604.7px;height:10.5px;background:#f3f3f3"></div>
<div style="position:absolute;left:266.3px;top:299px;width:0.8px;height:57px;background:#e2e2e2"></div>
<div style="position:absolute;left:690.5px;top:299px;width:0.8px;height:57px;background:#e2e2e2"></div>
<div style="position:absolute;left:145px;top:355.5px;width:604.7px;height:1px;background:#bdbdbd"></div>
<div style="position:absolute;left:145px;top:356.5px;width:604.7px;height:13px;background:#ebebeb"></div>
<svg style="position:absolute;left:149px;top:358.5px" width="9" height="9" viewBox="0 0 9 9"><circle cx="4.5" cy="4.5" r="3.8" fill="#fff" stroke="#90cc90" stroke-width="1"/><path d="M2.5 4.5 l1.5 1.5 l2.5 -3" stroke="#90cc90" stroke-width="1" fill="none"/></svg>
<div style="position:absolute;left:159.7px;top:361.00px;font-family:'Liberation Sans', sans-serif;font-size:6.6px;line-height:6.6px;color:#b4b4b4;font-weight:400;white-space:pre;-webkit-text-stroke:0.12px #b4b4b4;">Save</div>
<svg style="position:absolute;left:180.5px;top:359px" width="8" height="8" viewBox="0 0 8 8"><rect x="0.5" y="0.5" width="7" height="7" fill="#fff" stroke="#f0a090" stroke-width="1"/><path d="M2 2 l4 4 M6 2 l-4 4" stroke="#f0a090" stroke-width="1"/></svg>
<div style="position:absolute;left:190.2px;top:361.00px;font-family:'Liberation Sans', sans-serif;font-size:6.9px;line-height:6.9px;color:#b4b4b4;font-weight:400;white-space:pre;-webkit-text-stroke:0.12px #b4b4b4;">Cancel</div>
<svg style="position:absolute;left:216.2px;top:359.4px" width="9" height="9" viewBox="0 0 9 9"><path d="M2.2 7.6 V1.2 Q2.2 0.5 3 0.5 H8.2 Q8.8 0.5 8.8 1.2 V2 H7.4 V7.8 Q7.4 8.6 6.6 8.6 H1 Q0.3 8.6 0.3 7.9 V7.2 H2.2 Z" fill="#a8d0f0" stroke="#8cc0ea" stroke-width="0.5"/><rect x="3.6" y="4.6" width="2.2" height="2.2" fill="none" stroke="#e8f2fa" stroke-width="0.6"/></svg>
<div style="position:absolute;left:226.4px;top:361.00px;font-family:'Liberation Sans', sans-serif;font-size:6.9px;line-height:6.9px;color:#b4b4b4;font-weight:400;white-space:pre;-webkit-text-stroke:0.12px #b4b4b4;">Script</div>
<div style="position:absolute;left:249.2px;top:357.5px;width:0.8px;height:11px;background:#d8d8d8"></div>
<svg style="position:absolute;left:253.3px;top:359.2px" width="10" height="9" viewBox="0 0 10 9"><path d="M0 0.6 H8.5 M0 3 H8.5 M0 5.4 H6 M0 7.8 H4" stroke="#7ab6ea" stroke-width="1.1"/><path d="M5 8.6 L8.8 4.8" stroke="#4a90d8" stroke-width="1.1"/></svg>
<svg style="position:absolute;left:266.4px;top:359.2px" width="10" height="9" viewBox="0 0 10 9"><path d="M0 0.6 H8 M0 3 H8 M0 5.4 H5.5 M0 7.8 H5" stroke="#7ab6ea" stroke-width="1.1"/><path d="M7.2 4.6 V9 M5 6.8 H9.4" stroke="#6cc06c" stroke-width="1.1"/></svg>
<svg style="position:absolute;left:279px;top:359.2px" width="10" height="9" viewBox="0 0 10 9"><path d="M0 0.6 H8.5 M0 3 H3 M5.5 3 H8.5 M0 5.4 H3 M0 7.8 H3" stroke="#7ab6ea" stroke-width="1.1"/><path d="M6.6 4 V8.6 M4.3 6.3 H8.9" stroke="#6cc06c" stroke-width="1.1"/></svg>
<svg style="position:absolute;left:292.1px;top:359.2px" width="10" height="9" viewBox="0 0 10 9"><path d="M0 0.6 H8.5 M0 3 H8.5 M0 5.4 H5 M0 7.8 H5" stroke="#7ab6ea" stroke-width="1.1"/><path d="M5.8 7 H9.8" stroke="#ef6a5a" stroke-width="1.1"/></svg>
<svg style="position:absolute;left:308px;top:359px" width="7" height="8" viewBox="0 0 7 8"><path d="M0.5 0 v8 M6 0.5 l-4 3.5 l4 3.5" stroke="#6a9ad8" stroke-width="1" fill="none"/></svg>
<svg style="position:absolute;left:321px;top:359px" width="6" height="8" viewBox="0 0 6 8"><path d="M5 0.5 l-4 3.5 l4 3.5" stroke="#6a9ad8" stroke-width="1" fill="none"/></svg>
<svg style="position:absolute;left:334.5px;top:359px" width="6" height="8" viewBox="0 0 6 8"><path d="M1 0.5 l4 3.5 l-4 3.5" stroke="#6a9ad8" stroke-width="1" fill="none"/></svg>
<svg style="position:absolute;left:346.4px;top:359px" width="7" height="8" viewBox="0 0 7 8"><path d="M6.5 0 v8 M1 0.5 l4 3.5 l-4 3.5" stroke="#6a9ad8" stroke-width="1" fill="none"/></svg>
<div style="position:absolute;left:358.4px;top:357.5px;width:0.8px;height:11px;background:#d8d8d8"></div>
<svg style="position:absolute;left:362.4px;top:358.5px" width="9" height="9" viewBox="0 0 9 9"><path d="M0.5 8 v-4 h4 v4" stroke="#9ac0e8" stroke-width="1" fill="none"/><rect x="4.5" y="0.5" width="4" height="4" fill="none" stroke="#9ac0e8" stroke-width="1"/></svg>
<svg style="position:absolute;left:375.7px;top:358.5px" width="9" height="9" viewBox="0 0 9 9"><path d="M0.5 3 v-2.5 h2.5 M6 0.5 h2.5 v2.5 M8.5 6 v2.5 h-2.5 M3 8.5 h-2.5 v-2.5" stroke="#9ac0e8" stroke-width="1" fill="none"/><rect x="3" y="3" width="3" height="3" fill="#9ac0e8"/></svg>
<svg style="position:absolute;left:390.3px;top:358.5px" width="9" height="10" viewBox="0 0 9 10"><path d="M0.5 0.5 h5 l3 3 v6 h-8 z" fill="#fff" stroke="#3d86d0" stroke-width="1"/><circle cx="6.5" cy="7.5" r="2" fill="#3d86d0"/></svg>
<div style="position:absolute;left:400.4px;top:361.00px;font-family:'Liberation Sans', sans-serif;font-size:6.9px;line-height:6.9px;color:#1e1e1e;font-weight:400;white-space:pre;-webkit-text-stroke:0.12px #1e1e1e;">Record</div>
<svg style="position:absolute;left:427.5px;top:358.5px" width="9" height="9" viewBox="0 0 9 9"><rect x="0.5" y="0.5" width="8" height="8" fill="#fff" stroke="#3d86d0" stroke-width="1"/><rect x="0.5" y="0.5" width="8" height="2.5" fill="#3d86d0"/><rect x="2" y="4.5" width="3" height="2.5" fill="#3d86d0"/></svg>
<div style="position:absolute;left:437.7px;top:361.00px;font-family:'Liberation Sans', sans-serif;font-size:6.8px;line-height:6.8px;color:#1e1e1e;font-weight:400;white-space:pre;-webkit-text-stroke:0.12px #1e1e1e;">Panels</div>
<svg style="position:absolute;left:461px;top:362px" width="3" height="2.5" viewBox="0 0 3 2.5"><path d="M0 0 L3 0 L1.5 2.5 Z" fill="#333"/></svg>
<div style="position:absolute;left:467px;top:357.5px;width:0.8px;height:11px;background:#d8d8d8"></div>
<svg style="position:absolute;left:470px;top:358.8px" width="9" height="9" viewBox="0 0 9 9"><path d="M7.63 3.81 L8.86 3.93 L8.86 5.07 L7.63 5.19 L7.46 5.72 L7.20 6.23 L7.99 7.18 L7.18 7.99 L6.23 7.20 L5.72 7.46 L5.19 7.63 L5.07 8.86 L3.93 8.86 L3.81 7.63 L3.28 7.46 L2.77 7.20 L1.82 7.99 L1.01 7.18 L1.80 6.23 L1.54 5.72 L1.37 5.19 L0.14 5.07 L0.14 3.93 L1.37 3.81 L1.54 3.28 L1.80 2.77 L1.01 1.82 L1.82 1.01 L2.77 1.80 L3.28 1.54 L3.81 1.37 L3.93 0.14 L5.07 0.14 L5.19 1.37 L5.72 1.54 L6.23 1.80 L7.18 1.01 L7.99 1.82 L7.20 2.77 L7.46 3.28 Z" fill="#3a8ad6"/><circle cx="4.5" cy="4.5" r="1.3" fill="#ebebeb"/></svg>
<svg style="position:absolute;left:480.5px;top:362px" width="3" height="2.5" viewBox="0 0 3 2.5"><path d="M0 0 L3 0 L1.5 2.5 Z" fill="#333"/></svg>
<div style="position:absolute;left:145px;top:369.8px;width:604.7px;height:16.5px;background:#ebebeb"></div>
<div style="position:absolute;left:147.3px;top:372.2px;width:602px;height:13.8px;border-left:1px solid #d4d4d4;border-top:1px solid #d4d4d4;box-sizing:border-box"></div>
<svg style="position:absolute;left:149px;top:375px" width="9" height="9" viewBox="0 0 9 9"><circle cx="4.5" cy="4.5" r="3.8" fill="#fff" stroke="#3d86d0" stroke-width="1"/><path d="M4.5 3.8 v3" stroke="#3d86d0" stroke-width="1.1"/><circle cx="4.5" cy="2.4" r="0.6" fill="#3d86d0"/></svg>
<div style="position:absolute;left:161.4px;top:376.00px;font-family:'Liberation Sans', sans-serif;font-size:7.75px;line-height:7.75px;color:#1a1a1a;font-weight:400;white-space:pre;-webkit-text-stroke:0.12px #1a1a1a;">1 row(s) fetched - 56ms</div>
<svg style="position:absolute;left:440.5px;top:375px" width="10" height="10" viewBox="0 0 10 10"><path d="M4.5 0.5 v9 M2.5 0.5 h4 M2.5 9.5 h4" stroke="#3d86d0" stroke-width="0.9"/><rect x="0.5" y="3" width="3" height="4" fill="#9ac8ee"/><rect x="5.5" y="3" width="4" height="4" fill="#9ac8ee"/></svg>
<div style="position:absolute;left:453.5px;top:373px;width:0.8px;height:12px;background:#d0d0d0"></div>
<div style="position:absolute;left:455.4px;top:372.1px;width:77.3px;height:13.6px;border:1px solid #d6d6d6;box-sizing:border-box"></div>
<svg style="position:absolute;left:457px;top:375px" width="11" height="9" viewBox="0 0 11 9"><path d="M1 4.5 v-2 q0 -1.5 1.5 -1.5 h6 M7 -0.5 l2 1.5 l-2 1.5 M10 4.5 v2 q0 1.5 -1.5 1.5 h-6 M4 6.5 l-2 1.5 l2 1.5" stroke="#3aa03a" stroke-width="1.4" fill="none"/></svg>
<div style="position:absolute;left:471.8px;top:376.00px;font-family:'Liberation Sans', sans-serif;font-size:7.75px;line-height:7.75px;color:#1a1a1a;font-weight:400;white-space:pre;-webkit-text-stroke:0.12px #1a1a1a;">1</div>
<div style="position:absolute;left:0;top:387px;width:752px;height:16px;background:linear-gradient(#e6e6e6,#dedede)"></div>
<div style="position:absolute;left:0px;top:402px;width:752px;height:1px;background:#a9a9a9"></div>
<div style="position:absolute;left:0px;top:401.5px;width:1.5px;height:1.5px;background:#333"></div>
<div style="position:absolute;left:307.3px;top:388px;width:0.8px;height:12.5px;background:#c4c4c4"></div>
<div style="position:absolute;left:332.4px;top:388px;width:0.8px;height:12.5px;background:#c4c4c4"></div>
<div style="position:absolute;left:363.5px;top:388px;width:0.8px;height:12.5px;background:#c4c4c4"></div>
<div style="position:absolute;left:433.4px;top:388px;width:0.8px;height:12.5px;background:#c4c4c4"></div>
<div style="position:absolute;left:498.2px;top:388px;width:0.8px;height:12.5px;background:#c4c4c4"></div>
<div style="position:absolute;left:312.1px;top:391.00px;font-family:'Liberation Sans', sans-serif;font-size:7.5px;line-height:7.5px;color:#1e1e1e;font-weight:400;white-space:pre;-webkit-text-stroke:0.12px #1e1e1e;">MSK</div>
<div style="position:absolute;left:336.7px;top:391.00px;font-family:'Liberation Sans', sans-serif;font-size:7.45px;line-height:7.45px;color:#1e1e1e;font-weight:400;white-space:pre;-webkit-text-stroke:0.12px #1e1e1e;">en_RU</div>
<div style="position:absolute;left:367.9px;top:391.00px;font-family:'Liberation Sans', sans-serif;font-size:8.1px;line-height:8.1px;color:#1e1e1e;font-weight:400;white-space:pre;-webkit-text-stroke:0.12px #1e1e1e;">Writable</div>
<div style="position:absolute;left:437.7px;top:391.00px;font-family:'Liberation Sans', sans-serif;font-size:8.1px;line-height:8.1px;color:#1e1e1e;font-weight:400;white-space:pre;-webkit-text-stroke:0.12px #1e1e1e;">Smart Insert</div>
<div style="position:absolute;left:503.8px;top:391.00px;font-family:'Liberation Sans', sans-serif;font-size:8.1px;line-height:8.1px;color:#1e1e1e;font-weight:400;white-space:pre;-webkit-text-stroke:0.12px #1e1e1e;letter-spacing:0.25px">23 : 50</div>
<svg style="position:absolute;left:564px;top:391px" width="1" height="10" viewBox="0 0 1 10"><rect x="0" y="0.0" width="1" height="1" fill="#a8a8a8"/><rect x="0" y="2.5" width="1" height="1" fill="#a8a8a8"/><rect x="0" y="5.0" width="1" height="1" fill="#a8a8a8"/><rect x="0" y="7.5" width="1" height="1" fill="#a8a8a8"/></svg>
</body></html>
